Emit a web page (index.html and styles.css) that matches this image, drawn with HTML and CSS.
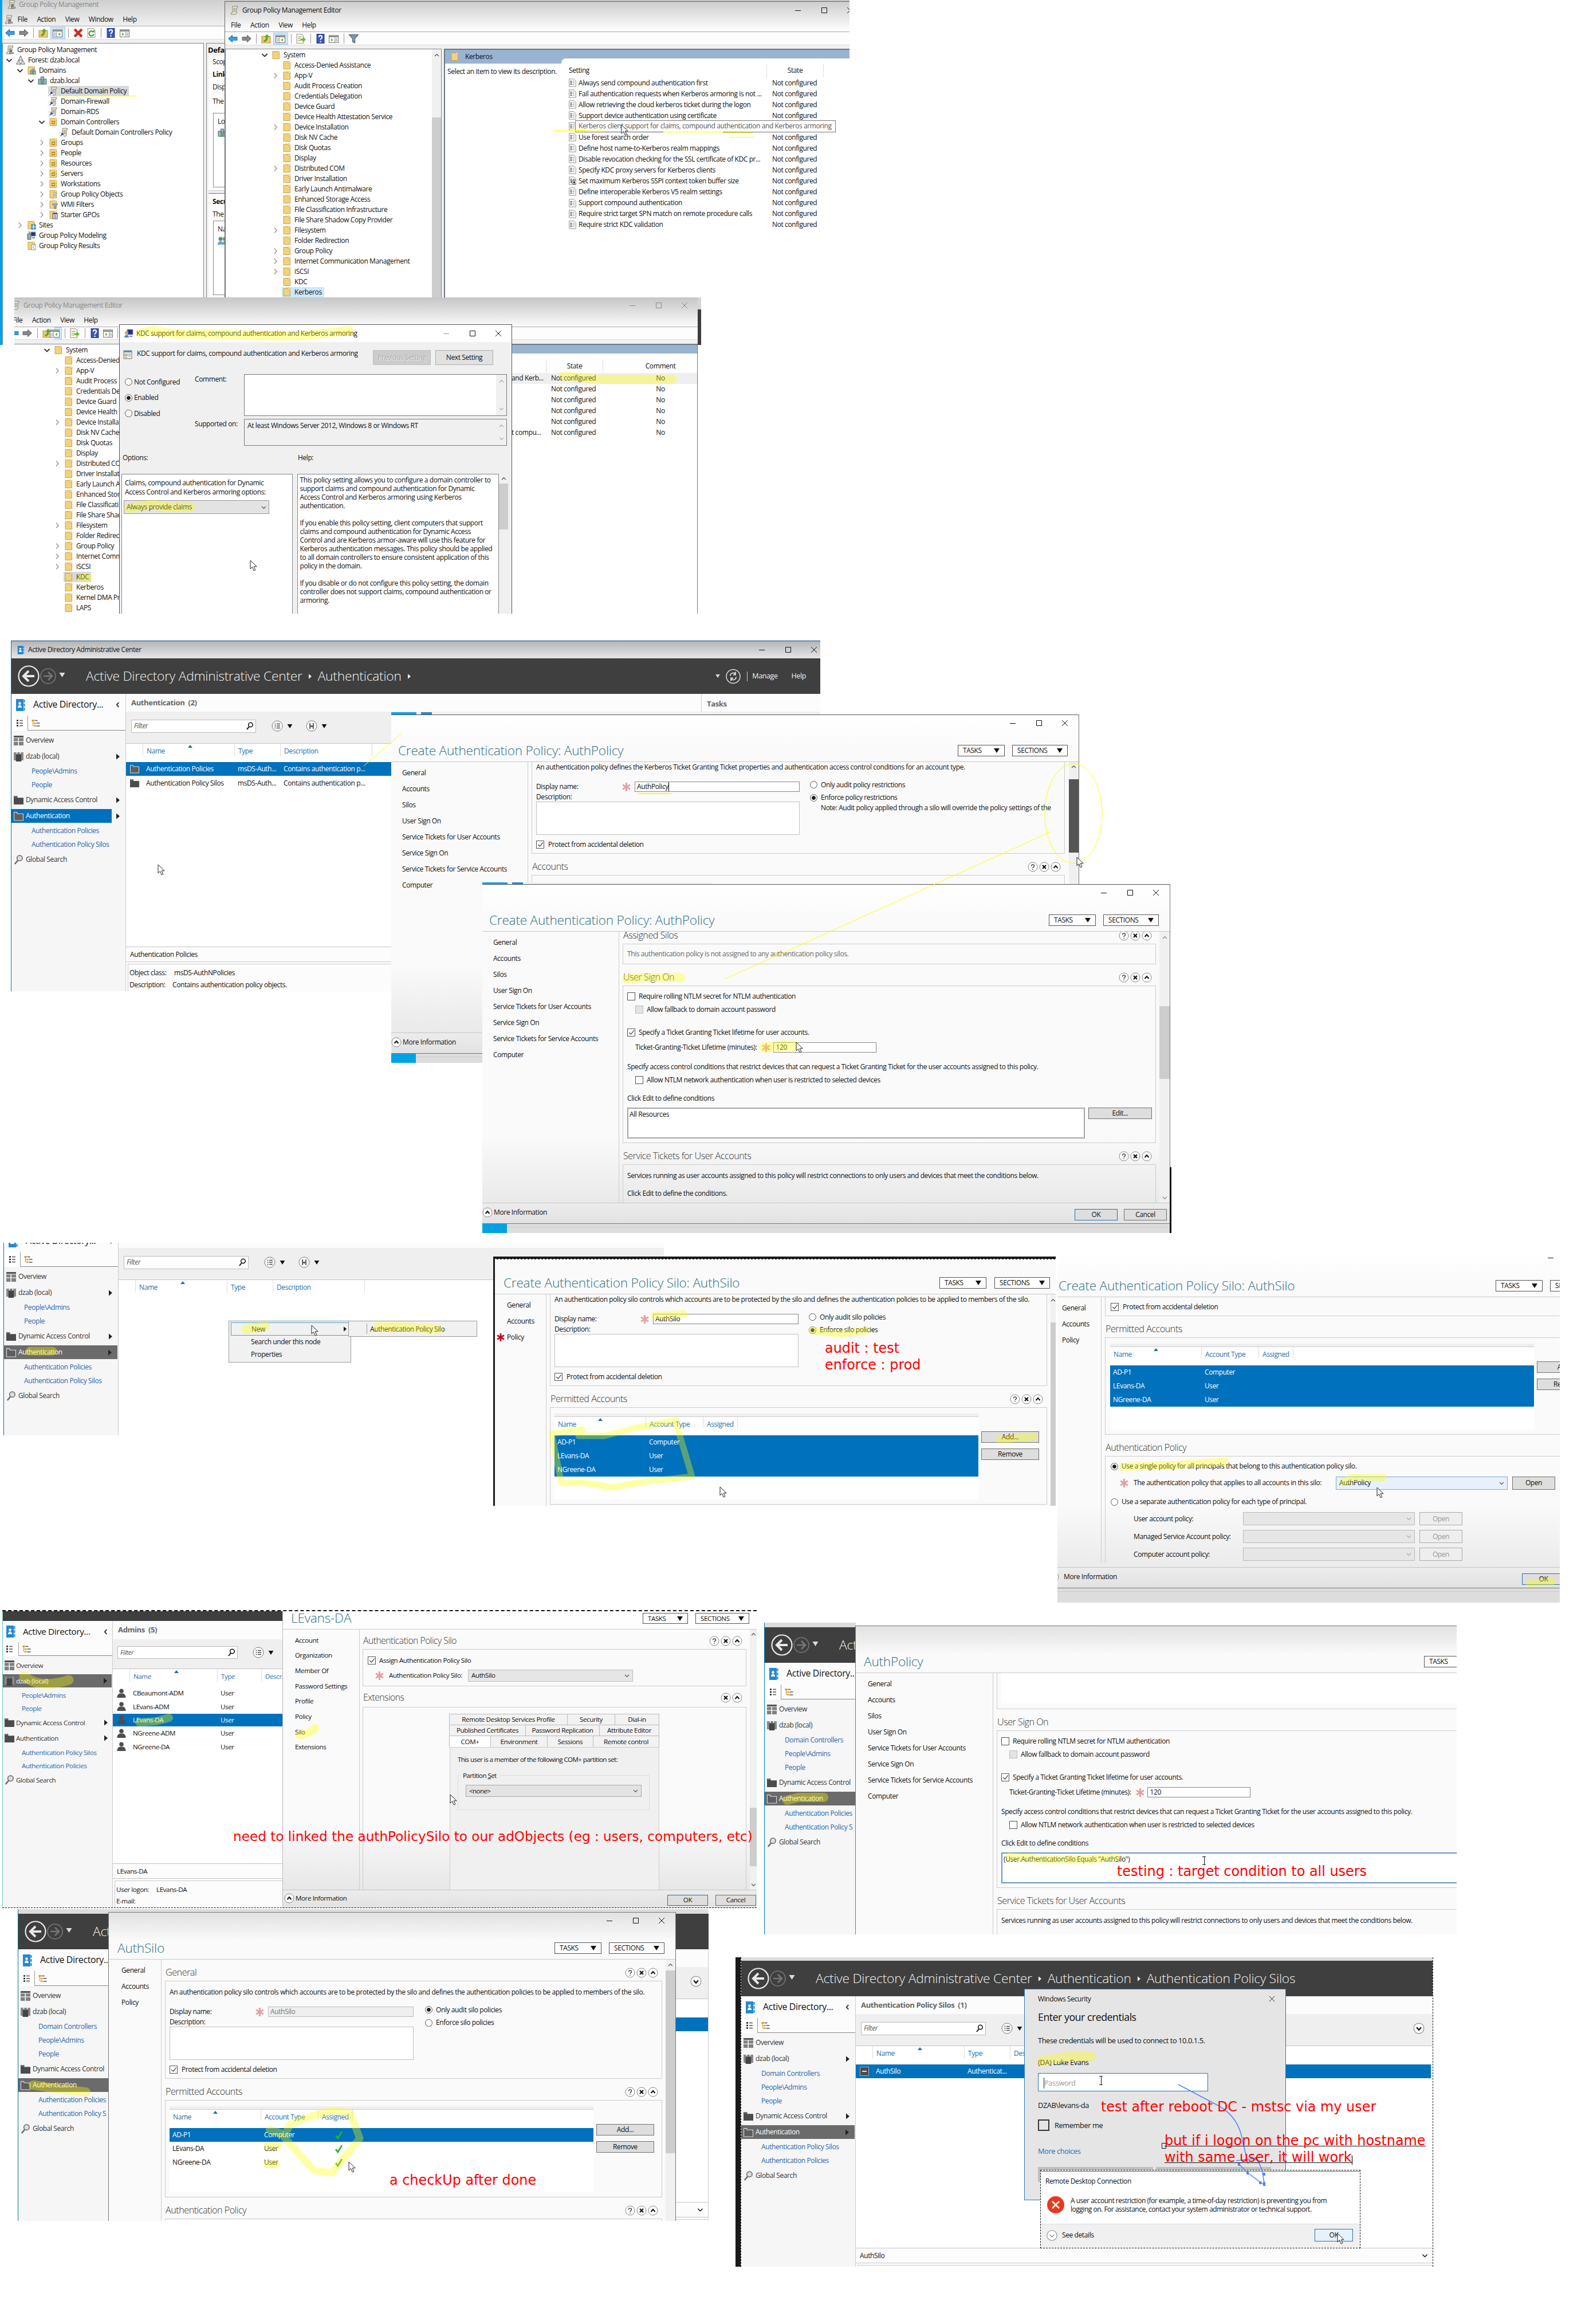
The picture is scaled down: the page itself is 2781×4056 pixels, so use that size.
FILE: index.html
```html
<!DOCTYPE html>
<html lang="en">
<head>
<meta charset="utf-8">
<title>Authentication policies and silos</title>
<link rel="stylesheet" href="styles.css">
</head>
<body>
<svg class="defs" width="0" height="0">
  <symbol id="fold" viewBox="0 0 16 16"><path d="M2 1.500h8l1 1.500h2.500v11.500h-11.500z" fill="#f3d27c" stroke="#c9a24c"/><path d="M10 1l3.500 0v3h-3.500z" fill="#fdf0bd" stroke="#c9a24c" stroke-width=".7"/></symbol>
  <symbol id="ou" viewBox="0 0 16 16"><use href="#fold"/><path d="M5 6h6v6h-6z" fill="#b98a1d"/><path d="M6.500 8h3v2h-3z" fill="#ffe9a0"/></symbol>
  <symbol id="scroll" viewBox="0 0 16 16"><path d="M5 1h9l-1 3h-1v9l-1 2h-9l1-3h2z" fill="#e8e4d4" stroke="#8a8672"/><path d="M6.500 5h4M6.500 7.500h4M6.500 10h4" stroke="#77735f"/></symbol>
  <symbol id="gpm" viewBox="0 0 16 16"><use href="#scroll"/><path d="M8 8h4v4h3v3h-8z" fill="#777"/><path d="M9 13h5" stroke="#ddd"/></symbol>
  <symbol id="link" viewBox="0 0 16 16"><use href="#scroll"/><path d="M0 8h8v8h-8z" fill="#fff" stroke="#999" stroke-width=".6"/><path d="M2 14l3.500-3.500M3 10h3v3" fill="none" stroke="#22338a" stroke-width="1.500"/></symbol>
  <symbol id="forest" viewBox="0 0 16 16"><path d="M8 0l3.500 8h-7zM4.500 8l3.500 7h-7.500zM11.500 8l4 7h-7.500z" fill="#e3e3e3" stroke="#666"/></symbol>
  <symbol id="dom" viewBox="0 0 16 16"><path d="M5.500 1h5v6h-5zM1 5h5v9h-5zM10 5h5v9h-5z" fill="#8fb9c9" stroke="#4c6d78"/><path d="M6 8h4v7h-4z" fill="#69a35a"/></symbol>
  <symbol id="fdom" viewBox="0 0 16 16"><use href="#fold"/><use href="#dom" x="5" y="5" width="11" height="11"/></symbol>
  <symbol id="gpo" viewBox="0 0 16 16"><use href="#fold"/><use href="#scroll" x="5" y="4" width="11" height="12"/></symbol>
  <symbol id="wmi" viewBox="0 0 16 16"><use href="#fold"/><path d="M6 7h10l-4 4v5l-2-1v-4z" fill="#9db4c8" stroke="#56697a" stroke-width=".8"/></symbol>
  <symbol id="starter" viewBox="0 0 16 16"><use href="#fold"/><path d="M7 5h8v10h-8z" fill="#dde9f5" stroke="#456"/><path d="M7 5h8v2h-8z" fill="#b0352c"/><path d="M9 9h4M9 11h4M9 13h4" stroke="#57a"/></symbol>
  <symbol id="sites" viewBox="0 0 16 16"><use href="#fold"/><path d="M8 7h7v8h-7z" fill="#4aa3e0" stroke="#1c6ca8"/><path d="M11.500 7v8M8 11h7" stroke="#fff"/></symbol>
  <symbol id="model" viewBox="0 0 16 16"><path d="M1 5h6v10h-6z" fill="#9aa" stroke="#566"/><path d="M7 2h8v7h-8z" fill="#24348f" stroke="#889"/><path d="M3 1l3 4M9 12h5" stroke="#3a8" stroke-width="2"/></symbol>
  <symbol id="result" viewBox="0 0 16 16"><use href="#fold"/><path d="M8 6h7v9h-7z" fill="#fff" stroke="#888"/><path d="M13 8l-3 2.500l3 2.500" fill="none" stroke="#49a"/></symbol>
  <symbol id="back" viewBox="0 0 16 16"><path d="M1 8l6-5.500v3h8v5h-8v3z" fill="#35a3ea" stroke="#1c6fb0"/></symbol>
  <symbol id="fwd" viewBox="0 0 16 16"><path d="M15 8l-6-5.500v3h-8v5h8v3z" fill="#8a8a8a" stroke="#666"/></symbol>
  <symbol id="up" viewBox="0 0 16 16"><path d="M1 4h14v11h-14z" fill="#eccb6e" stroke="#b8933c"/><path d="M4 11c4 0 4-4 4-6h-2l3.500-4l3 4h-2c0 4-1 7-5 8z" fill="#56b334" stroke="#35801c" stroke-width=".6"/></symbol>
  <symbol id="pane" viewBox="0 0 16 16"><path d="M.5 2.500h15v12h-15z" fill="#fff" stroke="#777"/><path d="M1 4.500h14" stroke="#777" stroke-width="2"/><path d="M6 6v8M2 8h3M2 10h3M2 12h3" stroke="#999"/><path d="M12 7.500v5l-3-2.500z" fill="#49a32c"/></symbol>
  <symbol id="pane2" viewBox="0 0 16 16"><path d="M.5 2.500h15v12h-15z" fill="#fff" stroke="#777"/><path d="M1 4.500h14" stroke="#777" stroke-width="2"/><path d="M10 6v8M11 8h3M11 10h3M11 12h3" stroke="#999"/><path d="M4 7.500v5l3-2.500z" fill="#49a32c"/></symbol>
  <symbol id="del" viewBox="0 0 16 16"><path d="M2 2l12 12M14 2l-12 12" stroke="#d22a20" stroke-width="4"/></symbol>
  <symbol id="refresh" viewBox="0 0 16 16"><path d="M2 .5h9l3 3v12h-12z" fill="#fff" stroke="#999"/><path d="M11 6a4 4 0 1 0 1 4" fill="none" stroke="#3da02a" stroke-width="2"/><path d="M9 7h4v-4z" fill="#3da02a"/></symbol>
  <symbol id="export" viewBox="0 0 16 16"><path d="M1 .5h8l3 3v12h-11z" fill="#fff8dd" stroke="#999"/><path d="M3 5h6M3 8h4M3 11h4" stroke="#888"/><path d="M7 8h4v-3l5 4.500l-5 4.500v-3h-4z" fill="#67bb3c"/></symbol>
  <symbol id="help" viewBox="0 0 16 16"><path d="M2 0h12v16h-12z" fill="#3a55b4" stroke="#1d2f7a"/><path d="M5.500 5.500c0-3.500 5-3.500 5 0c0 2-2.500 2-2.500 4.500M8 12v2" fill="none" stroke="#fff" stroke-width="2"/></symbol>
  <symbol id="funnel" viewBox="0 0 16 16"><path d="M.5 1.500h15l-5.500 6.500v7l-4-2v-5z" fill="#7f97ad" stroke="#4f6376"/></symbol>
  <symbol id="set" viewBox="0 0 14 16"><path d="M.7.7h9l3.500 3.500v11h-12.500z" fill="#fafafa" stroke="#8b8b8b"/><path d="M3 5h2.500M3 8h2.500M3 11h2.500" stroke="#333" stroke-width="1.800"/><path d="M7 5h3.500M7 8h3.500M7 11h3.500" stroke="#888"/></symbol>
  <symbol id="setd" viewBox="0 0 14 16"><use href="#set"/><circle cx="10" cy="10.500" r="4.500" fill="#ddd" stroke="#444"/><path d="M10 7.500v5M8 10.500l2 2l2-2" fill="none" stroke="#222" stroke-width="1.300"/></symbol>
  <symbol id="pc" viewBox="0 0 16 16"><path d="M5 1h10v9h-10z" fill="#1d2f9c" stroke="#99a"/><circle cx="4" cy="7" r="3" fill="#c9a27c"/><path d="M0 15c0-6 8-6 8 0z" fill="#4d86c9"/><path d="M9 12h5v2h-5z" fill="#889"/></symbol>
  <symbol id="tmpl" viewBox="0 0 16 16"><path d="M1 1h14v14h-14z" fill="#f3efe0" stroke="#678"/><path d="M1 2.500h14" stroke="#49a" stroke-width="3"/><path d="M3 7h4v3h-4zM9 7h4M9 10h4M3 13h4" stroke="#976" fill="none"/></symbol>
  <symbol id="people" viewBox="0 0 16 16"><circle cx="5" cy="5" r="3.500" fill="#687"/><circle cx="12" cy="5" r="3.500" fill="#798"/><path d="M0 15c0-8 10-8 10 0zM8 15c0-8 9-8 9 0z" fill="#69a8c9"/></symbol>
  <symbol id="cr" viewBox="0 0 12 12"><path d="M4 1.500l4 4.500l-4 4.500" fill="none" stroke="#9a9a9a" stroke-width="1.500"/></symbol>
  <symbol id="cd" viewBox="0 0 12 12"><path d="M1.500 4l4.500 4.500l4.500-4.500" fill="none" stroke="#333" stroke-width="1.800"/></symbol>
  <symbol id="cu" viewBox="0 0 12 12"><path d="M1.500 8l4.500-4.500l4.500 4.500" fill="none" stroke="currentColor" stroke-width="1.800"/></symbol>
  <symbol id="cdl" viewBox="0 0 12 12"><path d="M1.500 4l4.500 4.500l4.500-4.500" fill="none" stroke="currentColor" stroke-width="1.600"/></symbol>
  <symbol id="cl" viewBox="0 0 8 12"><path d="M6 1.500l-4 4.500l4 4.500" fill="none" stroke="#222" stroke-width="2"/></symbol>
  <symbol id="dn" viewBox="0 0 10 8"><path d="M0 0h10l-5 8z" fill="currentColor"/></symbol>
  <symbol id="rt" viewBox="0 0 6 10"><path d="M0 0l6 5l-6 5z" fill="currentColor"/></symbol>
  <symbol id="srt" viewBox="0 0 8 5"><path d="M4 0l4 5h-8z" fill="#1c6ea8"/></symbol>
  <symbol id="min" viewBox="0 0 12 12"><path d="M1 6.500h10" stroke="currentColor"/></symbol>
  <symbol id="max" viewBox="0 0 12 12"><path d="M1.500 1.500h9v9h-9z" fill="none" stroke="currentColor"/></symbol>
  <symbol id="cls" viewBox="0 0 12 12"><path d="M1 1l10 10M11 1l-10 10" stroke="currentColor"/></symbol>
  <symbol id="adbook" viewBox="0 0 16 21"><path d="M0 0h13v21h-13z" fill="#2488d0"/><path d="M14.500 1v5M14.500 8v5M14.500 15v5" stroke="#2488d0" stroke-width="2"/><circle cx="6.500" cy="7.500" r="2.300" fill="#fff"/><path d="M3 15c0-6 7-6 7 0z" fill="#fff"/></symbol>
  <symbol id="lst" viewBox="0 0 12 12"><path d="M0 1.500h3M0 6h3M0 10.500h3" stroke="#222" stroke-width="2.500"/><path d="M5 1.500h6M5 6h6M5 10.500h6" stroke="#777" stroke-width="2"/></symbol>
  <symbol id="tre" viewBox="0 0 14 12"><path d="M2 2v8.500h3M2 6h3" fill="none" stroke="#c9962e"/><path d="M0 0h4v3h-4zM4 5h3v2.500h-3zM4 9.500h3v2.500h-3z" fill="#d79a22"/><path d="M5 1.500h5M8 6h6M8 11h6" stroke="#555" stroke-width="1.400"/></symbol>
  <symbol id="ovw" viewBox="0 0 16 16"><path d="M0 0h16v3h-16z" fill="#555"/><path d="M0 4h7v5h-7zM8.500 4h7.500v5h-7.500zM0 10h7v6h-7zM8.500 10h7.500v6h-7.500z" fill="#808080"/></symbol>
  <symbol id="srv" viewBox="0 0 16 16"><path d="M0 1h4.500v13h-4.500zM11.500 1h4.500v13h-4.500z" fill="#8a8a8a"/><path d="M3.500 4h9v12h-9z" fill="#454545"/><path d="M6 1h4v3h-4z" fill="#777"/></symbol>
  <symbol id="dfo" viewBox="0 0 16 16"><path d="M0 1h6v3h10v11h-16z" fill="#4c4c4c"/><path d="M1 2h4" stroke="#aaa"/></symbol>
  <symbol id="ofo" viewBox="0 0 16 16"><path d="M.5 1.500h5v2.500h10v11h-15z" fill="#5e5e5e" stroke="#ddd"/></symbol>
  <symbol id="mag" viewBox="0 0 16 18"><circle cx="10" cy="6" r="5" fill="#ddd" stroke="#666" stroke-width="1.600"/><path d="M6.500 10l-5.500 7" stroke="#666" stroke-width="2.500"/></symbol>
  <symbol id="find" viewBox="0 0 12 14"><circle cx="7.500" cy="5" r="3.800" fill="none" stroke="#111" stroke-width="1.500"/><path d="M5 8l-4 5" stroke="#111" stroke-width="2"/></symbol>
  <symbol id="usr" viewBox="0 0 16 18"><circle cx="8" cy="4.500" r="4" fill="#4d4d4d"/><path d="M0 17c0-6 3-7 5-8h6c2 1 5 2 5 8z" fill="#4d4d4d"/></symbol>
  <symbol id="cbl" viewBox="0 0 20 20"><circle cx="10" cy="10" r="9" fill="#fff" stroke="#777"/><path d="M5.500 6.500h2M5.500 10h2M5.500 13.500h2M9 6.500h6M9 10h6M9 13.500h6" stroke="#444" stroke-width="1.500"/></symbol>
  <symbol id="cbs" viewBox="0 0 20 20"><circle cx="10" cy="10" r="9" fill="#fff" stroke="#777"/><path d="M6 5h8v10h-8z" fill="#666"/><path d="M8 5h4v4h-4zM8 12h4v3h-4z" fill="#eee"/></symbol>
  <symbol id="q" viewBox="0 0 18 18"><circle cx="9" cy="9" r="8" fill="#fff" stroke="#888"/><path d="M6.500 7.500c0-3.500 5-3.500 5 0c0 1.500-2.500 1.800-2.500 3.500M9 12.500v1.500" fill="none" stroke="#333" stroke-width="1.300"/></symbol>
  <symbol id="x" viewBox="0 0 18 18"><circle cx="9" cy="9" r="8" fill="#fff" stroke="#888"/><path d="M6 6l6 6M12 6l-6 6" stroke="#111" stroke-width="2.200"/></symbol>
  <symbol id="c" viewBox="0 0 18 18"><circle cx="9" cy="9" r="8" fill="#fff" stroke="#888"/><path d="M5.500 11l3.500-4l3.500 4" fill="none" stroke="#111" stroke-width="2"/></symbol>
  <symbol id="v" viewBox="0 0 18 18"><circle cx="9" cy="9" r="8" fill="#fff" stroke="#888"/><path d="M5.500 7.500l3.500 4l3.500-4" fill="none" stroke="#111" stroke-width="2"/></symbol>
  <symbol id="ast" viewBox="0 0 14 14"><path d="M7 0v14M1 3.500l12 7M13 3.500l-12 7" stroke="currentColor" stroke-width="2.800"/></symbol>
  <symbol id="tick" viewBox="0 0 14 14"><path d="M2 8l3.500 4.500l6.500-11" fill="none" stroke="#28b428" stroke-width="2.600"/></symbol>
  <symbol id="navb" viewBox="0 0 80 40"><circle cx="20" cy="20" r="17.500" fill="none" stroke="#e8e8e8" stroke-width="2.200"/><path d="M30 20h-18M20 11l-9 9l9 9" fill="none" stroke="#e8e8e8" stroke-width="4"/><circle cx="54" cy="20" r="13" fill="none" stroke="#777" stroke-width="1.600"/><path d="M46 20h14M54 13l7 7l-7 7" fill="none" stroke="#777" stroke-width="2.600"/></symbol>
  <symbol id="ptr" viewBox="0 0 14 20"><path d="M1 1v15l3.500-3.500l2.800 6.500l2.600-1.200l-2.700-6h5z" fill="#fff" stroke="#222"/></symbol>
</svg>

<main class="board">

<!-- Group Policy Management -->
<section class="win gpmc">
  <div class="cap2 dim"><svg class="i"><use href="#gpm"/></svg><span>Group Policy Management</span></div>
  <div class="menu"><svg class="i"><use href="#gpm"/></svg><span>File</span><span>Action</span><span>View</span><span>Window</span><span>Help</span></div>
  <div class="tb"><svg class="i"><use href="#back"/></svg><svg class="i"><use href="#fwd"/></svg><hr><svg class="i"><use href="#up"/></svg><span class="on"><svg class="i"><use href="#pane"/></svg></span><hr><svg class="i"><use href="#del"/></svg><svg class="i"><use href="#refresh"/></svg><hr><svg class="i"><use href="#help"/></svg><svg class="i"><use href="#pane2"/></svg></div>
  <div class="gp-body">
    <ul class="tree t1">
      <li class="root"><svg class="i"><use href="#gpm"/></svg>Group Policy Management</li>
      <li><svg class="ch"><use href="#cd"/></svg><svg class="i"><use href="#forest"/></svg>Forest: dzab.local</li>
      <li class="l1"><svg class="ch"><use href="#cd"/></svg><svg class="i"><use href="#fdom"/></svg>Domains</li>
      <li class="l2"><svg class="ch"><use href="#cd"/></svg><svg class="i"><use href="#dom"/></svg>dzab.local</li>
      <li class="l3"><i class="ch"></i><span class="picked"><svg class="i"><use href="#link"/></svg>Default Domain Policy</span></li>
      <li class="l3"><i class="ch"></i><svg class="i"><use href="#link"/></svg>Domain-Firewall</li>
      <li class="l3"><i class="ch"></i><svg class="i"><use href="#link"/></svg>Domain-RDS</li>
      <li class="l3"><svg class="ch"><use href="#cd"/></svg><svg class="i"><use href="#ou"/></svg>Domain Controllers</li>
      <li class="l4"><i class="ch"></i><svg class="i"><use href="#link"/></svg>Default Domain Controllers Policy</li>
      <li class="l3"><svg class="ch"><use href="#cr"/></svg><svg class="i"><use href="#ou"/></svg>Groups</li>
      <li class="l3"><svg class="ch"><use href="#cr"/></svg><svg class="i"><use href="#ou"/></svg>People</li>
      <li class="l3"><svg class="ch"><use href="#cr"/></svg><svg class="i"><use href="#ou"/></svg>Resources</li>
      <li class="l3"><svg class="ch"><use href="#cr"/></svg><svg class="i"><use href="#ou"/></svg>Servers</li>
      <li class="l3"><svg class="ch"><use href="#cr"/></svg><svg class="i"><use href="#ou"/></svg>Workstations</li>
      <li class="l3"><svg class="ch"><use href="#cr"/></svg><svg class="i"><use href="#gpo"/></svg>Group Policy Objects</li>
      <li class="l3"><svg class="ch"><use href="#cr"/></svg><svg class="i"><use href="#wmi"/></svg>WMI Filters</li>
      <li class="l3"><svg class="ch"><use href="#cr"/></svg><svg class="i"><use href="#starter"/></svg>Starter GPOs</li>
      <li class="l1"><svg class="ch"><use href="#cr"/></svg><svg class="i"><use href="#sites"/></svg>Sites</li>
      <li class="l1"><i class="ch"></i><svg class="i"><use href="#model"/></svg>Group Policy Modeling</li>
      <li class="l1"><i class="ch"></i><svg class="i"><use href="#result"/></svg>Group Policy Results</li>
    </ul>
    <div class="scope">
      <h4>Default</h4>
      <div class="scope-tab">
        <p>Scope</p><p class="b">Links</p><p>Display</p><p class="far">The following</p>
        <div class="gbox">Location<svg class="i"><use href="#dom"/></svg></div>
        <div class="bar"></div>
        <p class="b">Security</p><p>The settings</p>
        <div class="gbox">Name<svg class="i"><use href="#people"/></svg></div>
        <div class="stub"></div>
      </div>
    </div>
  </div>
</section>

<!-- Group Policy Management Editor: Kerberos -->
<section class="win gped">
  <div class="cap2"><svg class="i"><use href="#scroll"/></svg><span>Group Policy Management Editor</span><div class="wb"><svg><use href="#min"/></svg><svg><use href="#max"/></svg><svg><use href="#cls"/></svg></div></div>
  <div class="menu"><span>File</span><span>Action</span><span>View</span><span>Help</span></div>
  <div class="tb"><svg class="i"><use href="#back"/></svg><svg class="i"><use href="#fwd"/></svg><hr><svg class="i"><use href="#up"/></svg><span class="on"><svg class="i"><use href="#pane"/></svg></span><hr><svg class="i"><use href="#export"/></svg><hr><svg class="i"><use href="#help"/></svg><svg class="i"><use href="#pane2"/></svg><hr><svg class="i"><use href="#funnel"/></svg></div>
  <div class="gp-body">
    <div class="tree-wrap">
      <ul class="tree t2">
        <li class="sys"><svg class="ch"><use href="#cd"/></svg><svg class="i"><use href="#fold"/></svg>System</li>
        <li><i class="ch"></i><svg class="i"><use href="#fold"/></svg>Access-Denied Assistance</li>
        <li><svg class="ch"><use href="#cr"/></svg><svg class="i"><use href="#fold"/></svg>App-V</li>
        <li><i class="ch"></i><svg class="i"><use href="#fold"/></svg>Audit Process Creation</li>
        <li><i class="ch"></i><svg class="i"><use href="#fold"/></svg>Credentials Delegation</li>
        <li><i class="ch"></i><svg class="i"><use href="#fold"/></svg>Device Guard</li>
        <li><i class="ch"></i><svg class="i"><use href="#fold"/></svg>Device Health Attestation Service</li>
        <li><svg class="ch"><use href="#cr"/></svg><svg class="i"><use href="#fold"/></svg>Device Installation</li>
        <li><i class="ch"></i><svg class="i"><use href="#fold"/></svg>Disk NV Cache</li>
        <li><i class="ch"></i><svg class="i"><use href="#fold"/></svg>Disk Quotas</li>
        <li><i class="ch"></i><svg class="i"><use href="#fold"/></svg>Display</li>
        <li><svg class="ch"><use href="#cr"/></svg><svg class="i"><use href="#fold"/></svg>Distributed COM</li>
        <li><i class="ch"></i><svg class="i"><use href="#fold"/></svg>Driver Installation</li>
        <li><i class="ch"></i><svg class="i"><use href="#fold"/></svg>Early Launch Antimalware</li>
        <li><i class="ch"></i><svg class="i"><use href="#fold"/></svg>Enhanced Storage Access</li>
        <li><i class="ch"></i><svg class="i"><use href="#fold"/></svg>File Classification Infrastructure</li>
        <li><i class="ch"></i><svg class="i"><use href="#fold"/></svg>File Share Shadow Copy Provider</li>
        <li><svg class="ch"><use href="#cr"/></svg><svg class="i"><use href="#fold"/></svg>Filesystem</li>
        <li><i class="ch"></i><svg class="i"><use href="#fold"/></svg>Folder Redirection</li>
        <li><svg class="ch"><use href="#cr"/></svg><svg class="i"><use href="#fold"/></svg>Group Policy</li>
        <li><svg class="ch"><use href="#cr"/></svg><svg class="i"><use href="#fold"/></svg>Internet Communication Management</li>
        <li><svg class="ch"><use href="#cr"/></svg><svg class="i"><use href="#fold"/></svg>iSCSI</li>
        <li><i class="ch"></i><svg class="i"><use href="#fold"/></svg>KDC</li>
        <li><i class="ch"></i><span class="picked blue"><svg class="i"><use href="#fold"/></svg>Kerberos</span></li>
      </ul>
      <div class="sb tsb"><svg><use href="#cu"/></svg><i></i></div>
    </div>
    <div class="kpane">
      <div class="kleft"><div class="khead"><svg class="i"><use href="#fold"/></svg>Kerberos</div><p>Select an item to view its description.</p></div>
      <div class="ktab">
        <div class="krow khd"><span class="kn">Setting</span><span class="ks">State</span><i></i></div>
        <div class="krow"><span class="kn"><svg><use href="#set"/></svg>Always send compound authentication first</span><span>Not configured</span></div>
        <div class="krow"><span class="kn"><svg><use href="#set"/></svg>Fail authentication requests when Kerberos armoring is not ...</span><span>Not configured</span></div>
        <div class="krow"><span class="kn"><svg><use href="#set"/></svg>Allow retrieving the cloud kerberos ticket during the logon</span><span>Not configured</span></div>
        <div class="krow"><span class="kn"><svg><use href="#set"/></svg>Support device authentication using certificate</span><span>Not configured</span></div>
        <div class="krow"><span class="kn"><svg><use href="#set"/></svg><em>Kerberos client support for claims, compound authentication and Kerberos armoring</em></span></div>
        <div class="krow"><span class="kn"><svg><use href="#set"/></svg>Use forest search order</span><span>Not configured</span></div>
        <div class="krow"><span class="kn"><svg><use href="#set"/></svg>Define host name-to-Kerberos realm mappings</span><span>Not configured</span></div>
        <div class="krow"><span class="kn"><svg><use href="#set"/></svg>Disable revocation checking for the SSL certificate of KDC pr...</span><span>Not configured</span></div>
        <div class="krow"><span class="kn"><svg><use href="#set"/></svg>Specify KDC proxy servers for Kerberos clients</span><span>Not configured</span></div>
        <div class="krow"><span class="kn"><svg><use href="#setd"/></svg>Set maximum Kerberos SSPI context token buffer size</span><span>Not configured</span></div>
        <div class="krow"><span class="kn"><svg><use href="#set"/></svg>Define interoperable Kerberos V5 realm settings</span><span>Not configured</span></div>
        <div class="krow"><span class="kn"><svg><use href="#set"/></svg>Support compound authentication</span><span>Not configured</span></div>
        <div class="krow"><span class="kn"><svg><use href="#set"/></svg>Require strict target SPN match on remote procedure calls</span><span>Not configured</span></div>
        <div class="krow"><span class="kn"><svg><use href="#set"/></svg>Require strict KDC validation</span><span>Not configured</span></div>
      </div>
    </div>
  </div>
</section>

<!-- Group Policy Management Editor: KDC -->
<section class="win kdc">
  <div class="kdc-main">
    <div class="cap2 dim"><svg class="i"><use href="#scroll"/></svg><span>Group Policy Management Editor</span><div class="wb"><svg><use href="#min"/></svg><svg><use href="#max"/></svg><svg><use href="#cls"/></svg></div></div>
    <div class="menu"><span>File</span><span>Action</span><span>View</span><span>Help</span></div>
    <div class="tb"><svg class="i"><use href="#back"/></svg><svg class="i"><use href="#fwd"/></svg><hr><svg class="i"><use href="#up"/></svg><span class="on"><svg class="i"><use href="#pane"/></svg></span><hr><svg class="i"><use href="#export"/></svg><hr><svg class="i"><use href="#help"/></svg><svg class="i"><use href="#pane2"/></svg><hr></div>
    <div class="gp-body">
      <ul class="tree t3">
        <li class="sys"><svg class="ch"><use href="#cd"/></svg><svg class="i"><use href="#fold"/></svg>System</li>
        <li><i class="ch"></i><svg class="i"><use href="#fold"/></svg>Access-Denied</li>
        <li><svg class="ch"><use href="#cr"/></svg><svg class="i"><use href="#fold"/></svg>App-V</li>
        <li><i class="ch"></i><svg class="i"><use href="#fold"/></svg>Audit Process</li>
        <li><i class="ch"></i><svg class="i"><use href="#fold"/></svg>Credentials De</li>
        <li><i class="ch"></i><svg class="i"><use href="#fold"/></svg>Device Guard</li>
        <li><i class="ch"></i><svg class="i"><use href="#fold"/></svg>Device Health</li>
        <li><svg class="ch"><use href="#cr"/></svg><svg class="i"><use href="#fold"/></svg>Device Installa</li>
        <li><i class="ch"></i><svg class="i"><use href="#fold"/></svg>Disk NV Cache</li>
        <li><i class="ch"></i><svg class="i"><use href="#fold"/></svg>Disk Quotas</li>
        <li><i class="ch"></i><svg class="i"><use href="#fold"/></svg>Display</li>
        <li><svg class="ch"><use href="#cr"/></svg><svg class="i"><use href="#fold"/></svg>Distributed CO</li>
        <li><i class="ch"></i><svg class="i"><use href="#fold"/></svg>Driver Installat</li>
        <li><i class="ch"></i><svg class="i"><use href="#fold"/></svg>Early Launch A</li>
        <li><i class="ch"></i><svg class="i"><use href="#fold"/></svg>Enhanced Stor</li>
        <li><i class="ch"></i><svg class="i"><use href="#fold"/></svg>File Classificati</li>
        <li><i class="ch"></i><svg class="i"><use href="#fold"/></svg>File Share Shad</li>
        <li><svg class="ch"><use href="#cr"/></svg><svg class="i"><use href="#fold"/></svg>Filesystem</li>
        <li><i class="ch"></i><svg class="i"><use href="#fold"/></svg>Folder Redirec</li>
        <li><svg class="ch"><use href="#cr"/></svg><svg class="i"><use href="#fold"/></svg>Group Policy</li>
        <li><svg class="ch"><use href="#cr"/></svg><svg class="i"><use href="#fold"/></svg>Internet Comm</li>
        <li><svg class="ch"><use href="#cr"/></svg><svg class="i"><use href="#fold"/></svg>iSCSI</li>
        <li><i class="ch"></i><span class="picked"><svg class="i"><use href="#fold"/></svg>KDC</span></li>
        <li><i class="ch"></i><svg class="i"><use href="#fold"/></svg>Kerberos</li>
        <li><i class="ch"></i><svg class="i"><use href="#fold"/></svg>Kernel DMA Pr</li>
        <li><i class="ch"></i><svg class="i"><use href="#fold"/></svg>LAPS</li>
      </ul>
      <div class="kdc-list">
        <div class="hd"></div>
        <div class="kr kh"><span></span><span>State</span><span>Comment</span></div>
        <div class="kr sel"><span>and Kerb...</span><span>Not configured</span><span>No</span></div>
        <div class="kr"><span></span><span>Not configured</span><span>No</span></div>
        <div class="kr"><span></span><span>Not configured</span><span>No</span></div>
        <div class="kr"><span></span><span>Not configured</span><span>No</span></div>
        <div class="kr"><span></span><span>Not configured</span><span>No</span></div>
        <div class="kr"><span>t compu...</span><span>Not configured</span><span>No</span></div>
      </div>
    </div>
  </div>
  <div class="kdc-edge"></div>
</section>

<section class="win pol">
  <div class="pol-cap"><svg class="i"><use href="#pc"/></svg><span>KDC support for claims, compound authentication and Kerberos armoring</span><div class="wb"><svg class="off"><use href="#min"/></svg><svg><use href="#max"/></svg><svg><use href="#cls"/></svg></div></div>
  <div class="pol-top"><svg class="i"><use href="#tmpl"/></svg><span>KDC support for claims, compound authentication and Kerberos armoring</span><b class="btn off">Previous Setting</b><b class="btn">Next Setting</b></div>
  <div class="pol-mid">
    <div class="radios"><p><i class="rd"></i>Not Configured</p><p><i class="rd on"></i>Enabled</p><p><i class="rd"></i>Disabled</p></div>
    <div class="labels"><p>Comment:</p><p>Supported on:</p></div>
    <div class="areas"><div class="area"><span></span><div class="asb"><svg><use href="#cu"/></svg><svg><use href="#cdl"/></svg></div></div><div class="area ro"><span>At least Windows Server 2012, Windows 8 or Windows RT</span><div class="asb"><svg><use href="#cu"/></svg><svg><use href="#cdl"/></svg></div></div></div>
  </div>
  <div class="pol-lbl"><span>Options:</span><span>Help:</span></div>
  <div class="pol-bot">
    <div class="opts"><p>Claims, compound authentication for Dynamic<br>Access Control and Kerberos armoring options:</p><div class="combo">Always provide claims<svg><use href="#cdl"/></svg></div></div>
    <div class="helpt">This policy setting allows you to configure a domain controller to<br>support claims and compound authentication for Dynamic<br>Access Control and Kerberos armoring using Kerberos<br>authentication.<br><br>If you enable this policy setting, client computers that support<br>claims and compound authentication for Dynamic Access<br>Control and are Kerberos armor-aware will use this feature for<br>Kerberos authentication messages. This policy should be applied<br>to all domain controllers to ensure consistent application of this<br>policy in the domain.<br><br>If you disable or do not configure this policy setting, the domain<br>controller does not support claims, compound authentication or<br>armoring.</div>
    <div class="sb hsb"><svg><use href="#cu"/></svg><i></i></div>
  </div>
</section>

<!-- Active Directory Administrative Center -->
<section class="win adac a3">
  <div class="ad-cap"><svg class="bk"><use href="#adbook"/></svg><span>Active Directory Administrative Center</span><div class="wb"><svg><use href="#min"/></svg><svg><use href="#max"/></svg><svg><use href="#cls"/></svg></div></div>
  <header class="dark"><svg class="nv"><use href="#navb"/></svg><svg class="dn"><use href="#dn"/></svg><h1>Active Directory Administrative Center</h1><svg class="rt"><use href="#rt"/></svg><h1>Authentication</h1><svg class="rt"><use href="#rt"/></svg><div class="dr"><svg class="dn sm"><use href="#dn"/></svg><svg class="rf" viewBox="0 0 26 26"><circle cx="13" cy="13" r="12" fill="none" stroke="#ddd" stroke-width="1.500"/><path d="M8 12a5 5 0 0 1 9-3M18 14a5 5 0 0 1-9 3M17 5v5h-4M9 21v-5h4" fill="none" stroke="#ddd" stroke-width="1.800"/></svg><hr><span>Manage</span><span>Help</span></div></header>
  <div class="ad-body">
    <nav class="side">
      <div class="brand"><svg class="bk"><use href="#adbook"/></svg><span>Active Directory...</span><svg class="cl"><use href="#cl"/></svg></div>
      <div class="tabs"><i><svg><use href="#lst"/></svg></i><b><svg><use href="#tre"/></svg></b></div>
      <a><svg><use href="#ovw"/></svg>Overview</a>
      <a><svg><use href="#srv"/></svg>dzab (local)<svg class="rt"><use href="#rt"/></svg></a>
      <a class="sub">People\Admins</a><a class="sub">People</a>
      <a><svg><use href="#dfo"/></svg>Dynamic Access Control<svg class="rt"><use href="#rt"/></svg></a>
      <a class="sel bl"><svg><use href="#ofo"/></svg>Authentication<svg class="rt"><use href="#rt"/></svg></a>
      <a class="sub">Authentication Policies</a><a class="sub">Authentication Policy Silos</a>
      <a><svg><use href="#mag"/></svg>Global Search</a>
    </nav>
    <div class="list">
      <div class="lh"><b>Authentication &nbsp;(2)</b><b class="tasks">Tasks</b></div>
      <div class="fbar"><div class="fi">Filter<svg><use href="#find"/></svg></div><svg class="cb"><use href="#cbl"/></svg><svg class="dn"><use href="#dn"/></svg><svg class="cb"><use href="#cbs"/></svg><svg class="dn"><use href="#dn"/></svg></div>
      <div class="cols"><i></i><span class="srt">Name<svg><use href="#srt"/></svg></span><span>Type</span><span>Description</span><span></span></div>
      <div class="lr sel"><i><svg><use href="#ofo"/></svg></i><span>Authentication Policies</span><span>msDS-Auth...</span><span>Contains authentication p...</span></div>
      <div class="lr"><i><svg><use href="#dfo"/></svg></i><span>Authentication Policy Silos</span><span>msDS-Auth...</span><span>Contains authentication p...</span></div>
      <div class="det"><h5>Authentication Policies</h5><div class="dbox"><p><span>Object class:</span>msDS-AuthNPolicies</p><p><span class="w75">Description:</span>Contains authentication policy objects.</p></div></div>
    </div>
  </div>
</section>

<!-- Create Authentication Policy, general -->
<div class="win strip s4s"><i></i><i></i></div>
<section class="win dlg d4">
  <div class="cap"><div class="wb"><svg><use href="#min"/></svg><svg><use href="#max"/></svg><svg><use href="#cls"/></svg></div></div>
  <div class="dt"><h2>Create Authentication Policy: AuthPolicy</h2><span class="tk">TASKS<svg><use href="#dn"/></svg></span><span class="tk sc">SECTIONS<svg><use href="#dn"/></svg></span></div>
  <div class="db">
    <ul class="dn-list"><li>General</li><li>Accounts</li><li>Silos</li><li>User Sign On</li><li>Service Tickets for User Accounts</li><li>Service Sign On</li><li>Service Tickets for Service Accounts</li><li>Computer</li></ul>
    <div class="ct">
      <div class="box gen up11"><p class="intro">An authentication policy defines the Kerberos Ticket Granting Ticket properties and authentication access control conditions for an account type.</p>
        <div class="g2"><div class="gl"><div class="gd"><span>Display name:</span><svg class="ast"><use href="#ast"/></svg><b class="in">AuthPolicy<i class="crt"></i></b></div><div class="gdl">Description:</div><div class="ta"></div><div class="ck"><i class="cx on"></i>Protect from accidental deletion</div></div>
        <div class="gr"><p><i class="rd"></i>Only audit policy restrictions</p><p><i class="rd on"></i>Enforce policy restrictions</p><p class="note">Note: Audit policy applied through a silo will override the policy settings of the</p></div></div></div>
      <div class="sh"><h3>Accounts</h3><svg><use href="#q"/></svg><svg><use href="#x"/></svg><svg><use href="#c"/></svg></div>
      <div class="box rest"></div>
    </div>
    <div class="sb v4"><svg><use href="#cu"/></svg><i></i></div>
  </div>
  <div class="ft"><svg><use href="#c"/></svg>More Information</div>
  <div class="task"><i></i></div>
</section>

<!-- Create Authentication Policy, user sign on -->
<div class="win strip s5s"><i></i><i></i></div>
<section class="win dlg d5">
  <div class="cap"><div class="wb"><svg><use href="#min"/></svg><svg><use href="#max"/></svg><svg><use href="#cls"/></svg></div></div>
  <div class="dt"><h2>Create Authentication Policy: AuthPolicy</h2><span class="tk">TASKS<svg><use href="#dn"/></svg></span><span class="tk sc">SECTIONS<svg><use href="#dn"/></svg></span></div>
  <div class="db">
    <ul class="dn-list"><li>General</li><li>Accounts</li><li>Silos</li><li>User Sign On</li><li>Service Tickets for User Accounts</li><li>Service Sign On</li><li>Service Tickets for Service Accounts</li><li>Computer</li></ul>
    <div class="ct">
      <div class="sh up16"><h3>Assigned Silos</h3><svg><use href="#q"/></svg><svg><use href="#x"/></svg><svg><use href="#c"/></svg></div>
      <div class="box none">This authentication policy is not assigned to any authentication policy silos.</div>
      <div class="sh"><h3>User Sign On</h3><svg><use href="#q"/></svg><svg><use href="#x"/></svg><svg><use href="#c"/></svg></div>
      <div class="box uso">
        <p><i class="cx"></i>Require rolling NTLM secret for NTLM authentication</p>
        <p class="in1"><i class="cx dis"></i>Allow fallback to domain account password</p>
        <p class="tgt"><i class="cx on"></i>Specify a Ticket Granting Ticket lifetime for user accounts.</p>
        <p class="in1 ttl">Ticket-Granting-Ticket Lifetime (minutes):<svg class="ast"><use href="#ast"/></svg><b class="in">120</b></p>
        <p class="acc">Specify access control conditions that restrict devices that can request a Ticket Granting Ticket for the user accounts assigned to this policy.</p>
        <p class="in1 alw"><i class="cx"></i>Allow NTLM network authentication when user is restricted to selected devices</p>
        <p class="clk">Click Edit to define conditions</p>
        <div class="cond"><div class="cbx">All Resources</div><b class="btn">Edit...</b></div>
      </div>
      <div class="sh"><h3>Service Tickets for User Accounts</h3><svg><use href="#q"/></svg><svg><use href="#x"/></svg><svg><use href="#c"/></svg></div>
      <div class="box stu"><p>Services running as user accounts assigned to this policy will restrict connections to only users and devices that meet the conditions below.</p><p>Click Edit to define the conditions.</p><div class="cut"><i></i><i></i></div></div>
    </div>
    <div class="sb v5"><svg><use href="#cu"/></svg><i></i><svg><use href="#cdl"/></svg></div>
  </div>
  <div class="ft"><svg><use href="#c"/></svg>More Information<b class="btn ok">OK</b><b class="btn">Cancel</b></div>
  <div class="task"><i></i></div>
</section>
<div class="win blk"></div>

<!-- New silo context menu -->
<section class="win adac a6">
  <div class="ad-body">
    <nav class="side">
      <div class="brand"><svg class="bk"><use href="#adbook"/></svg><span>Active Directory...</span><svg class="cl"><use href="#cl"/></svg></div>
      <div class="tabs"><i><svg><use href="#lst"/></svg></i><b><svg><use href="#tre"/></svg></b></div>
      <a><svg><use href="#ovw"/></svg>Overview</a>
      <a><svg><use href="#srv"/></svg>dzab (local)<svg class="rt"><use href="#rt"/></svg></a>
      <a class="sub">People\Admins</a><a class="sub">People</a>
      <a><svg><use href="#dfo"/></svg>Dynamic Access Control<svg class="rt"><use href="#rt"/></svg></a>
      <a class="sel"><svg><use href="#ofo"/></svg>Authentication<svg class="rt"><use href="#rt"/></svg></a>
      <a class="sub">Authentication Policies</a><a class="sub">Authentication Policy Silos</a>
      <a><svg><use href="#mag"/></svg>Global Search</a>
    </nav>
    <div class="list">
      <div class="lh"></div>
      <div class="fbar"><div class="fi">Filter<svg><use href="#find"/></svg></div><svg class="cb"><use href="#cbl"/></svg><svg class="dn"><use href="#dn"/></svg><svg class="cb"><use href="#cbs"/></svg><svg class="dn"><use href="#dn"/></svg></div>
      <div class="cols"><i></i><span class="srt">Name<svg><use href="#srt"/></svg></span><span>Type</span><span>Description</span><span></span></div>
    </div>
  </div>
</section>
<div class="win ctx"><p class="hot">New<svg><use href="#rt"/></svg></p><p>Search under this node</p><p>Properties</p></div>
<div class="win ctx2"><p>Authentication Policy Silo</p></div>

<!-- Create Authentication Policy Silo -->
<section class="win dlg d7">
  <div class="dt"><h2>Create Authentication Policy Silo: AuthSilo</h2><span class="tk">TASKS<svg><use href="#dn"/></svg></span><span class="tk sc">SECTIONS<svg><use href="#dn"/></svg></span></div>
  <div class="db">
    <ul class="dn-list"><li>General</li><li>Accounts</li><li><svg class="req"><use href="#ast"/></svg>Policy</li></ul>
    <div class="ct">
      <div class="box gen up11"><p class="intro">An authentication policy silo controls which accounts are to be protected by the silo and defines the authentication policies to be applied to members of the silo.</p>
        <div class="g2"><div class="gl"><div class="gd"><span>Display name:</span><svg class="ast"><use href="#ast"/></svg><b class="in">AuthSilo</b></div><div class="gdl">Description:</div><div class="ta"></div><div class="ck"><i class="cx on"></i>Protect from accidental deletion</div></div>
        <div class="gr"><p><i class="rd"></i>Only audit silo policies</p><p><i class="rd on"></i>Enforce silo policies</p></div></div></div>
      <div class="sh"><h3>Permitted Accounts</h3><svg><use href="#q"/></svg><svg><use href="#x"/></svg><svg><use href="#c"/></svg></div>
      <div class="box perm"><div class="pl"><div class="ph"><span>Name<svg><use href="#srt"/></svg></span><span>Account Type</span><span>Assigned</span><span></span></div>
        <div class="pr sel"><span>AD-P1</span><span>Computer</span></div><div class="pr sel"><span>LEvans-DA</span><span>User</span></div><div class="pr sel"><span>NGreene-DA</span><span>User</span></div></div>
        <div class="pb"><b class="btn">Add...</b><b class="btn">Remove</b></div></div>
    </div>
    <div class="sb v7"><svg><use href="#cu"/></svg><i></i></div>
  </div>
</section>

<section class="win dlg d8">
  <div class="cap"><div class="wb"><svg><use href="#min"/></svg></div></div>
  <div class="dt"><h2>Create Authentication Policy Silo: AuthSilo</h2><span class="tk">TASKS<svg><use href="#dn"/></svg></span><span class="tk sc">SECTIONS</span></div>
  <div class="db">
    <ul class="dn-list"><li>General</li><li>Accounts</li><li>Policy</li></ul>
    <div class="ct">
      <div class="box prot"><div class="ck"><i class="cx on"></i>Protect from accidental deletion</div></div>
      <div class="sh"><h3>Permitted Accounts</h3></div>
      <div class="box perm"><div class="pl"><div class="ph"><span>Name<svg><use href="#srt"/></svg></span><span>Account Type</span><span>Assigned</span><span></span></div>
        <div class="pr sel"><span>AD-P1</span><span>Computer</span></div><div class="pr sel"><span>LEvans-DA</span><span>User</span></div><div class="pr sel"><span>NGreene-DA</span><span>User</span></div></div>
        <div class="pb"><b class="btn">Add...</b><b class="btn">Remove</b></div></div>
      <div class="sh"><h3>Authentication Policy</h3></div>
      <div class="box ap">
        <p class="r1"><i class="rd on"></i>Use a single policy for all principals that belong to this authentication policy silo.</p>
        <p class="r2"><svg class="ast"><use href="#ast"/></svg><span>The authentication policy that applies to all accounts in this silo:</span><b class="cmb act">AuthPolicy<svg><use href="#cdl"/></svg></b><b class="btn">Open</b></p>
        <p class="r3"><i class="rd"></i>Use a separate authentication policy for each type of principal.</p>
        <p class="r4"><span>User account policy:</span><b class="cmb"><svg><use href="#cdl"/></svg></b><b class="btn">Open</b></p>
        <p class="r4"><span>Managed Service Account policy:</span><b class="cmb"><svg><use href="#cdl"/></svg></b><b class="btn">Open</b></p>
        <p class="r4"><span>Computer account policy:</span><b class="cmb"><svg><use href="#cdl"/></svg></b><b class="btn">Open</b></p>
      </div>
    </div>
  </div>
  <div class="ft"><svg><use href="#c"/></svg>More Information<b class="btn ok">OK</b></div>
  <div class="task"></div>
</section>

<!-- Admins list -->
<section class="win adac a9">
  <header class="dark"></header>
  <div class="ad-body">
    <nav class="side">
      <div class="brand"><svg class="bk"><use href="#adbook"/></svg><span>Active Directory...</span><svg class="cl"><use href="#cl"/></svg></div>
      <div class="tabs"><i><svg><use href="#lst"/></svg></i><b><svg><use href="#tre"/></svg></b></div>
      <a><svg><use href="#ovw"/></svg>Overview</a>
      <a class="sel"><svg><use href="#srv"/></svg>dzab (local)<svg class="rt"><use href="#rt"/></svg></a>
      <a class="sub">People\Admins</a><a class="sub">People</a>
      <a><svg><use href="#dfo"/></svg>Dynamic Access Control<svg class="rt"><use href="#rt"/></svg></a>
      <a><svg><use href="#dfo"/></svg>Authentication<svg class="rt"><use href="#rt"/></svg></a>
      <a class="sub">Authentication Policy Silos</a><a class="sub">Authentication Policies</a>
      <a><svg><use href="#mag"/></svg>Global Search</a>
    </nav>
    <div class="list">
      <div class="lh"><b>Admins &nbsp;(5)</b></div>
      <div class="fbar"><div class="fi">Filter<svg><use href="#find"/></svg></div><svg class="cb"><use href="#cbl"/></svg><svg class="dn"><use href="#dn"/></svg></div>
      <div class="cols"><i></i><span class="srt">Name<svg><use href="#srt"/></svg></span><span>Type</span><span>Descri</span></div>
      <div class="lr"><i><svg><use href="#usr"/></svg></i><span>CBeaumont-ADM</span><span>User</span></div>
      <div class="lr"><i><svg><use href="#usr"/></svg></i><span>LEvans-ADM</span><span>User</span></div>
      <div class="lr sel"><i><svg><use href="#usr"/></svg></i><span>LEvans-DA</span><span>User</span></div>
      <div class="lr"><i><svg><use href="#usr"/></svg></i><span>NGreene-ADM</span><span>User</span></div>
      <div class="lr"><i><svg><use href="#usr"/></svg></i><span>NGreene-DA</span><span>User</span></div>
      <div class="det"><h5>LEvans-DA</h5><div class="dbox"><p><span class="w70">User logon:</span>LEvans-DA</p><p>E-mail:</p></div></div>
    </div>
  </div>
</section>
<section class="win dlg d9">
  <div class="dt"><h2>LEvans-DA</h2><span class="tk">TASKS<svg><use href="#dn"/></svg></span><span class="tk sc">SECTIONS<svg><use href="#dn"/></svg></span></div>
  <div class="db">
    <ul class="dn-list"><li>Account</li><li>Organization</li><li>Member Of</li><li>Password Settings</li><li>Profile</li><li>Policy</li><li>Silo</li><li>Extensions</li></ul>
    <div class="ct">
      <div class="sh"><h3>Authentication Policy Silo</h3><svg><use href="#q"/></svg><svg><use href="#x"/></svg><svg><use href="#c"/></svg></div>
      <div class="box asg"><p><i class="cx on"></i>Assign Authentication Policy Silo</p><p><svg class="ast"><use href="#ast"/></svg><span>Authentication Policy Silo:</span><b class="cmb">AuthSilo<svg><use href="#cdl"/></svg></b></p></div>
      <div class="sh"><h3>Extensions</h3><svg><use href="#x"/></svg><svg><use href="#c"/></svg></div>
      <div class="box ext"><div class="tabset">
        <div class="trow ta1"><span>Remote Desktop Services Profile</span><span>Security</span><span>Dial-in</span></div>
        <div class="trow ta2"><span>Published Certificates</span><span>Password Replication</span><span>Attribute Editor</span></div>
        <div class="trow ta3"><span class="cur">COM+</span><span>Environment</span><span>Sessions</span><span>Remote control</span></div>
        <div class="tpane"><p>This user is a member of the following COM+ partition set:</p><fieldset><legend>Partition <u>S</u>et</legend><div class="cmb">&lt;none&gt;<svg><use href="#cdl"/></svg></div></fieldset></div>
      </div></div>
    </div>
    <div class="sb v9"><svg><use href="#cu"/></svg><i></i><svg><use href="#cdl"/></svg></div>
  </div>
  <div class="ft"><svg><use href="#c"/></svg>More Information<b class="btn ok">OK</b><b class="btn">Cancel</b></div>
</section>
<div class="win edge9"></div>

<!-- AuthPolicy -->
<section class="win adac a10">
  <div class="grey"></div>
  <header class="dark"><svg class="nv"><use href="#navb"/></svg><svg class="dn"><use href="#dn"/></svg><h1>Act</h1></header>
  <div class="ad-body">
    <nav class="side">
      <div class="brand"><svg class="bk"><use href="#adbook"/></svg><span>Active Directory..</span></div>
      <div class="tabs"><i><svg><use href="#lst"/></svg></i><b><svg><use href="#tre"/></svg></b></div>
      <a><svg><use href="#ovw"/></svg>Overview</a>
      <a><svg><use href="#srv"/></svg>dzab (local)</a>
      <a class="sub">Domain Controllers</a><a class="sub">People\Admins</a><a class="sub">People</a>
      <a><svg><use href="#dfo"/></svg>Dynamic Access Control</a>
      <a class="sel"><svg><use href="#ofo"/></svg>Authentication</a>
      <a class="sub">Authentication Policies</a><a class="sub">Authentication Policy S</a>
      <a><svg><use href="#mag"/></svg>Global Search</a>
    </nav>
  </div>
</section>
<section class="win dlg d10">
  <div class="cap"></div>
  <div class="dt"><h2>AuthPolicy</h2><span class="tk">TASKS</span></div>
  <div class="db">
    <ul class="dn-list"><li>General</li><li>Accounts</li><li>Silos</li><li>User Sign On</li><li>Service Tickets for User Accounts</li><li>Service Sign On</li><li>Service Tickets for Service Accounts</li><li>Computer</li></ul>
    <div class="ct">
      <div class="box wht"><div></div></div>
      <div class="sh"><h3>User Sign On</h3></div>
      <div class="box uso">
        <p><i class="cx"></i>Require rolling NTLM secret for NTLM authentication</p>
        <p class="in1"><i class="cx dis"></i>Allow fallback to domain account password</p>
        <p class="tgt"><i class="cx on"></i>Specify a Ticket Granting Ticket lifetime for user accounts.</p>
        <p class="in1 ttl">Ticket-Granting-Ticket Lifetime (minutes):<svg class="ast"><use href="#ast"/></svg><b class="in">120</b></p>
        <p class="acc">Specify access control conditions that restrict devices that can request a Ticket Granting Ticket for the user accounts assigned to this policy.</p>
        <p class="in1 alw"><i class="cx"></i>Allow NTLM network authentication when user is restricted to selected devices</p>
        <p class="clk">Click Edit to define conditions</p>
        <div class="cond"><div class="cbx foc">(User.AuthenticationSilo Equals "AuthSilo")</div></div>
      </div>
      <div class="sh"><h3>Service Tickets for User Accounts</h3></div>
      <div class="box stu"><p>Services running as user accounts assigned to this policy will restrict connections to only users and devices that meet the conditions below.</p></div>
    </div>
  </div>
</section>

<!-- AuthSilo -->
<section class="win adac a11">
  <div class="grey"></div>
  <header class="dark"><svg class="nv"><use href="#navb"/></svg><svg class="dn"><use href="#dn"/></svg><h1>Act</h1></header>
  <div class="ad-body">
    <nav class="side">
      <div class="brand"><svg class="bk"><use href="#adbook"/></svg><span>Active Directory..</span></div>
      <div class="tabs"><i><svg><use href="#lst"/></svg></i><b><svg><use href="#tre"/></svg></b></div>
      <a><svg><use href="#ovw"/></svg>Overview</a>
      <a><svg><use href="#srv"/></svg>dzab (local)</a>
      <a class="sub">Domain Controllers</a><a class="sub">People\Admins</a><a class="sub">People</a>
      <a><svg><use href="#dfo"/></svg>Dynamic Access Control</a>
      <a class="sel"><svg><use href="#ofo"/></svg>Authentication</a>
      <a class="sub">Authentication Policies</a><a class="sub">Authentication Policy S</a>
      <a><svg><use href="#mag"/></svg>Global Search</a>
    </nav>
    <div class="list">
      <div class="lh"></div>
      <div class="fbar"><svg class="cb end"><use href="#v"/></svg></div>
      <div class="cols"></div><div class="lr sel"></div>
      <div class="det"><h5><svg class="vv"><use href="#cdl"/></svg></h5><div class="dbox"></div></div>
    </div>
  </div>
</section>
<section class="win dlg d11">
  <div class="cap"><div class="wb"><svg><use href="#min"/></svg><svg><use href="#max"/></svg><svg><use href="#cls"/></svg></div></div>
  <div class="dt"><h2>AuthSilo</h2><span class="tk">TASKS<svg><use href="#dn"/></svg></span><span class="tk sc">SECTIONS<svg><use href="#dn"/></svg></span></div>
  <div class="db">
    <ul class="dn-list"><li>General</li><li>Accounts</li><li>Policy</li></ul>
    <div class="ct">
      <div class="sh"><h3>General</h3><svg><use href="#q"/></svg><svg><use href="#x"/></svg><svg><use href="#c"/></svg></div>
      <div class="box gen"><p class="intro">An authentication policy silo controls which accounts are to be protected by the silo and defines the authentication policies to be applied to members of the silo.</p>
        <div class="g2"><div class="gl"><div class="gd"><span>Display name:</span><svg class="ast"><use href="#ast"/></svg><b class="in ro">AuthSilo</b></div><div class="gdl">Description:</div><div class="ta"></div><div class="ck"><i class="cx on"></i>Protect from accidental deletion</div></div>
        <div class="gr"><p><i class="rd on"></i>Only audit silo policies</p><p><i class="rd"></i>Enforce silo policies</p></div></div></div>
      <div class="sh"><h3>Permitted Accounts</h3><svg><use href="#q"/></svg><svg><use href="#x"/></svg><svg><use href="#c"/></svg></div>
      <div class="box perm"><div class="pl"><div class="ph"><span>Name<svg><use href="#srt"/></svg></span><span>Account Type</span><span>Assigned</span><span></span></div>
        <div class="pr sel"><span>AD-P1</span><span>Computer</span><svg><use href="#tick"/></svg></div><div class="pr"><span>LEvans-DA</span><span>User</span><svg><use href="#tick"/></svg></div><div class="pr"><span>NGreene-DA</span><span>User</span><svg><use href="#tick"/></svg></div></div>
        <div class="pb"><b class="btn">Add...</b><b class="btn">Remove</b></div></div>
      <div class="sh"><h3>Authentication Policy</h3><svg><use href="#q"/></svg><svg><use href="#x"/></svg><svg><use href="#c"/></svg></div>
      <div class="box rest"></div>
    </div>
    <div class="sb v11"><svg><use href="#cu"/></svg><i></i></div>
  </div>
</section>

<!-- Credential test -->
<section class="win adac a12">
  <div class="grey"></div>
  <header class="dark"><svg class="nv"><use href="#navb"/></svg><svg class="dn"><use href="#dn"/></svg><h1>Active Directory Administrative Center</h1><svg class="rt"><use href="#rt"/></svg><h1>Authentication</h1><svg class="rt"><use href="#rt"/></svg><h1>Authentication Policy Silos</h1></header>
  <div class="ad-body">
    <nav class="side">
      <div class="brand"><svg class="bk"><use href="#adbook"/></svg><span>Active Directory...</span><svg class="cl"><use href="#cl"/></svg></div>
      <div class="tabs"><i><svg><use href="#lst"/></svg></i><b><svg><use href="#tre"/></svg></b></div>
      <a><svg><use href="#ovw"/></svg>Overview</a>
      <a><svg><use href="#srv"/></svg>dzab (local)<svg class="rt"><use href="#rt"/></svg></a>
      <a class="sub">Domain Controllers</a><a class="sub">People\Admins</a><a class="sub">People</a>
      <a><svg><use href="#dfo"/></svg>Dynamic Access Control<svg class="rt"><use href="#rt"/></svg></a>
      <a class="sel"><svg><use href="#ofo"/></svg>Authentication<svg class="rt"><use href="#rt"/></svg></a>
      <a class="sub">Authentication Policy Silos</a><a class="sub">Authentication Policies</a>
      <a><svg><use href="#mag"/></svg>Global Search</a>
    </nav>
    <div class="list">
      <div class="lh"><b>Authentication Policy Silos &nbsp;(1)</b></div>
      <div class="fbar"><div class="fi">Filter<svg><use href="#find"/></svg></div><svg class="cb"><use href="#cbl"/></svg><svg class="dn"><use href="#dn"/></svg><svg class="cb end"><use href="#v"/></svg></div>
      <div class="cols"><i></i><span class="srt">Name<svg><use href="#srt"/></svg></span><span>Type</span><span>Des</span></div>
      <div class="lr sel"><i><svg viewBox="0 0 16 16"><path d="M.5.5h15v15h-15z" fill="#4c4c4c" stroke="#aaa"/><path d="M4 8h8" stroke="#ddd" stroke-width="2"/></svg></i><span>AuthSilo</span><span>Authenticat...</span></div>
      <div class="det"><h5>AuthSilo<svg class="vv"><use href="#cdl"/></svg></h5><div class="dbox"></div></div>
    </div>
  </div>
</section>
<section class="win cred">
  <div class="cr-cap">Windows Security<svg><use href="#cls"/></svg></div>
  <h2>Enter your credentials</h2>
  <p class="c1">These credentials will be used to connect to 10.0.1.5.</p>
  <p class="c2">(DA) Luke Evans</p>
  <div class="pw"><i></i>Password</div>
  <p class="c3">DZAB\levans-da</p>
  <p class="c4"><i></i>Remember me</p>
  <p class="c5">More choices</p>
  <div class="cbtn"><i></i><i></i></div>
</section>
<section class="win rdc">
  <p class="rt1">Remote Desktop Connection</p>
  <div class="rmsg"><svg viewBox="0 0 30 30"><circle cx="15" cy="15" r="15" fill="#e8391f"/><path d="M9 9l12 12M21 9l-12 12" stroke="#fff" stroke-width="2.500"/></svg><span>A user account restriction (for example, a time-of-day restriction) is preventing you from<br>logging on. For assistance, contact your system administrator or technical support.</span></div>
  <div class="rft"><svg viewBox="0 0 18 18"><circle cx="9" cy="9" r="8.300" fill="#fff" stroke="#888"/><path d="M5 7.500l4 4l4-4" fill="none" stroke="#777"/></svg>See details<b class="btn ok">OK</b></div>
</section>

<!-- Marker strokes, pen lines and pointers -->
<svg class="ink" viewBox="0 0 2781 4056" width="2781" height="4056">
  <g fill="none" stroke="#ffff00" stroke-opacity=".35" stroke-linecap="round" stroke-linejoin="round" stroke-width="16">
    <path d="M246 581l20-4l40 6h60l100 3h60l84-9"/>
    <path d="M984 656l60 6h130"/><path d="M225 887l40-7l30 5h38"/><path d="M143 1008h10"/>
    <path d="M1094 1708l30-2h64"/><path d="M1335 1828l30-3h22" stroke-width="18"/>
    <path d="M52 2358h40" stroke-width="15"/><path d="M429 2320l34-5"/><path d="M660 2316h50l56 4"/>
    <path d="M1142 2296l52-3M1418 2322l50 6l45-6" stroke-width="13"/><path d="M1745 2513l60-6" stroke-width="13"/>
    <path d="M963 2502l55-7l-8 11h45l50-13l74-14l29 98l-90 10l-48 9l-50-8h-40z" stroke-width="11"/>
    <path d="M1960 2560l90-3l88-6" stroke-width="14"/><path d="M2345 2587l14-8h56" stroke-width="13"/><path d="M2670 2764l40-4" stroke-width="13"/>
    <path d="M42 2926q30 22 78 6" stroke-width="17"/><path d="M243 3006l30-2l22-6" stroke-width="14"/><path d="M524 3028q16-2 26-12" stroke-width="15"/>
    <path d="M1374 3142l20-5h44"/><path d="M1762 3240l60 5h75l52-4" stroke-width="14"/>
    <path d="M58 3639l40 6l52 6"/><path d="M471 3717l18 6M467 3745h18M467 3777h14" stroke-width="14"/>
    <path d="M582 3683l30 6l16 43l-48 60l-32-4l-52-58l10-22l36-14z" stroke-width="13"/>
    <path d="M1818 3597l50-8h36" stroke-width="17"/>
  </g>
  <g fill="none" stroke="#ffff00">
    <path d="M106 167.500h133M966 227.500h56M1002 228.500h52M1054 229.500h104M1158 230.500h104M1262 231.500h52M1274 239.500h44"/>
    <path d="M1114 1385h58" stroke-width="2"/><path d="M701 1280l-66 57M1836 1451l-571 258"/>
    <ellipse cx="1874" cy="1420" rx="50" ry="87"/>
  </g>
  <g fill="none" stroke="#4f86ff" stroke-width="1.500"><path d="M2057 3638l72 38q34 20 40 60l10 40M2158 3771l34-4M2192 3767q12 12 15 45M2163 3777l15 15l30 22"/><path d="M2163 3775v5M2178 3790v5M2207 3792v5M2207 3808v7M2200 3807v5M2192 3765v5" stroke-width="4"/></g>
  <g stroke="#111"><path d="M2033 3745.500h456M2033 3774.500h327M2360.500 3762v16" stroke-width="1.200"/><path d="M2028.500 3740.500h7v9h-7z" fill="none"/><path d="M2099 3240.500h6M2099 3254.500h6M2102.500 3240v14M1919 3623.500h6M1919 3638.500h6M1922.500 3623v15"/></g>
  <use href="#ptr" x="1084" y="217" width="14" height="20"/><use href="#ptr" x="436" y="977" width="14" height="20"/><use href="#ptr" x="275" y="1508" width="14" height="20"/>
  <use href="#ptr" x="1879" y="1495" width="14" height="20"/><use href="#ptr" x="1389" y="1818" width="14" height="20"/><use href="#ptr" x="543" y="2312" width="14" height="20"/>
  <use href="#ptr" x="1256" y="2594" width="14" height="20"/><use href="#ptr" x="2403" y="2595" width="14" height="20"/><use href="#ptr" x="785" y="3131" width="14" height="20"/>
  <use href="#ptr" x="608" y="3772" width="14" height="20"/><use href="#ptr" x="2334" y="3897" width="14" height="20"/>
</svg>
<p class="red n1">audit : test<br>enforce : prod</p>
<p class="red n2">need to linked the authPolicySilo to our adObjects (eg : users, computers, etc)</p>
<p class="red n3">testing : target condition to all users</p>
<p class="red n4">a checkUp after done</p>
<p class="red n5">test after reboot DC - mstsc via my user</p>
<p class="red n6">but if i logon on the pc with hostname<br>with same user, it will work</p>
</main>
</body>
</html>
```
FILE: styles.css
```css
*{box-sizing:border-box;margin:0;padding:0}
body{background:#fff;font:12px/1 "Open Sans","Noto Sans",sans-serif;letter-spacing:-.4px;color:#111;white-space:nowrap}
ul{list-style:none}
svg{flex:none;display:block}
hr{border:0}
b{font-weight:400}
.defs{position:absolute}
.board{position:relative;width:2781px;height:4056px;overflow:hidden}
.win{position:absolute;overflow:hidden;display:flex;flex-direction:column}
.ink{position:absolute;left:0;top:0}
.i{width:16px;height:16px}

/* window buttons */
.wb{margin-left:auto;display:flex;gap:33.500px;color:#111}
.wb svg{width:12px;height:12px}
.wb .off{color:#999}

/* management console frames */
.cap2{display:flex;align-items:center;height:28px;gap:8px;padding-left:8px}
.cap2.dim{color:#888}.cap2.dim .wb{color:#888}
.menu{display:flex;align-items:center;gap:16.500px;height:24px;border-bottom:1px solid #aaa}
.tb{display:flex;align-items:center;height:23px;background:#fdfdfd;border-bottom:1px solid #ddd}
.tb .i{margin:0 3.200px;width:17px;height:17px}
.tb hr{width:1px;height:17px;background:#999;margin:0 5px}
.tb .on{background:#cce6fa;border:1px solid #99cdf2;height:21px;display:flex;align-items:center;margin-left:1px}
.gp-body{display:flex;flex:1;margin-top:6px;min-height:0}
.gpmc{left:0;top:0;width:440px;height:602px;border-left:4px solid #00a2ed;background:linear-gradient(#cfcfcf,#f0f0f0 45px)}
.gpmc .cap2{height:22px;padding:0 0 6px 8px;gap:5px}
.gpmc .menu{padding-left:3px}.gpmc .menu .i{margin-right:-9px}
.gpmc .tb{padding-left:2px}
.tree{background:#fff;border:1px solid #828790;padding-top:2px;overflow:hidden}
.tree li{display:flex;align-items:center;height:18px}
.tree .ch{width:12px;height:12px;margin-right:6px;flex:none}
.tree .i{margin-right:5px}
.picked{display:flex;align-items:center;height:18px;background:#d9d9d9;padding-right:4px;margin-left:-1px;padding-left:1px}
.picked.blue{background:#cce8ff}
.t1{width:352px;height:530px}
.t1 li{padding-left:5px}.t1 .root{padding-left:4px}.t1 .l1{padding-left:24px}.t1 .l2{padding-left:43px}.t1 .l3{padding-left:62px}.t1 .l4{padding-left:81px}
.scope{width:60px;margin-left:4px;border:1px solid #828790;border-width:1px 0 0 1px;overflow:hidden;background:#f0f0f0}
.scope h4{font-size:13px;padding:5px 0 0 2px;height:21px}
.scope-tab{margin-left:3px;background:#fff;padding-left:7px;height:440px}
.scope p{height:22px;line-height:22px}.scope .b{font-weight:700}.scope .far{height:34px;line-height:28px}
.gbox{border:1px solid #828790;height:130px;margin-left:1px;padding:8px 0 0 7px;width:200px}
.gbox .i{margin-top:6px}
.bar{height:6px;margin:5px -7px 3px;border-top:1px solid #ccc;border-bottom:1px solid #777;background:#eee}
.stub{height:20px;background:#ddd;border:1px solid #aaa;margin-top:6px;width:99px}
.gped{left:392px;top:2px;width:1091px;height:520px;border:1px solid #666;border-width:1.500px 0 0 1px;background:linear-gradient(#cdcdcd,#fcfcfc 48px,#f0f0f0 70px);box-shadow:0 -2px #c8c8c8}
.gped .cap2{height:29px;gap:6px}
.gped .cap2 .wb{margin-right:-7px}
.gped .menu{padding-left:10px}
.gped .tb{padding-left:2px}
.tree-wrap{display:flex;width:378px;border:1px solid #828790;background:#fff}
.tree-wrap .tree{border:0;flex:1;padding-top:1px}
.t2 li{padding-left:81px}.t2 .sys{padding-left:62px}
.sb{display:flex;flex-direction:column;align-items:center;background:#f0f0f0;color:#555;flex:none}
.sb svg{width:9px;height:9px}.sb i{background:#cdcdcd;width:100%}
.tsb{width:16px;padding-top:6px}.tsb i{margin-top:104px;flex:1}
.kpane{flex:1;display:flex;margin-left:4px;border:solid #6d7783;border-width:2px 0 0 2px;background:linear-gradient(#99b4d1 24px,#fff 24px)}
.kleft{width:203px}
.khead{height:24px;display:flex;align-items:center;gap:10px;padding-left:9px}
.kleft p{padding:8px 0 0 4px}
.ktab{flex:1;margin-top:15px;background:#fff;border-radius:8px 0 0 0;padding-top:9px}
.krow{display:flex;align-items:center;height:19.050px;padding-left:13px}
.krow svg{width:13px;height:15px;margin-right:4px}
.kn{width:355px;display:flex;align-items:center;flex:none}
.krow em{font-style:normal;border:1px solid #767676;background:#fff;color:#575757;padding:3px 6px 4px 5px;margin-left:-6px}
.khd{height:24px;align-items:stretch;line-height:24px}.khd .kn{width:345px}.khd .ks{border:1px solid #ddd;border-width:0 1px;width:100px;text-align:center;padding-left:0}

.kdc{left:25px;top:519px;width:1199px;height:552px;flex-direction:row;background:#fff}
.kdc-main{width:1193px;display:flex;flex-direction:column;background:linear-gradient(#c6c6c6,#fcfcfc 52px,#f0f0f0 70px)}
.kdc-main .cap2{margin-left:-6px;gap:6px;padding-left:0}
.kdc-main .cap2 .wb{margin-right:17px}
.kdc-main .menu{margin-left:-4px;padding-left:1px}
.kdc-main .tb{height:22px}.kdc-main .tb .i:first-child{margin-left:-9px}
.kdc-main .gp-body{margin-top:6.500px}
.kdc-edge{width:6px;background:linear-gradient(#d5d5d5 21px,#3d3d3d 21px,#3d3d3d 83px,#fff 83px)}
.t3{width:300px;border-width:1px 0 0;padding-top:1.500px}
.t3 li{padding-left:69px}.t3 .sys{padding-left:51px}
.kdc-list{flex:1;background:#fff;border-top:2px solid #6d7783;border-right:1px solid #777}
.kdc-list .hd{background:#99b4d1;height:15px}
.kr{display:grid;grid-template-columns:60px 100px 1fr;align-items:center;height:19px;padding-left:568px}
.kr span:nth-child(2){padding-left:9px}.kr span:nth-child(3){text-align:center;padding-left:36px}
.kh{height:24px;margin:10px 0 0}.kh span{height:24px;line-height:24px}.kh span:nth-child(2){border:1px solid #ddd;border-width:0 1px;text-align:center;padding:0}
.kr.sel{background:#efefef}
.btn{display:flex;align-items:center;justify-content:center;background:#dedede;border:1px solid #707070;height:20px;flex:none}
.btn.ok{border:1.500px solid #2a6fb0}
.pol{left:208px;top:566px;width:686px;height:505px;background:#f0f0f0;border:1px solid #555;border-bottom:0;border-top-width:1.500px}
.pol-cap{display:flex;align-items:center;height:30px;background:#fff;padding:0 17px 0 8px;gap:5px}
.pol-top{display:flex;height:56px;padding-left:6px}
.pol-top .i{margin:14px 8px 0 0}.pol-top span{width:412px;padding-top:14px}
.pol-top .btn{height:26px;width:101px;margin:14px 8px 0 0;border-color:#adadad;background:#e1e1e1}
.pol-top .off{background:#ccc;color:#aaa;text-shadow:1px 1px #f5f5f5;border-color:#bfbfbf}
.pol-mid{display:flex;height:138px}
.radios{width:131px;padding:0 0 0 9px}
.radios p{display:flex;align-items:center;gap:3px;height:27.500px}
.rd{width:13px;height:13px;border:1px solid #555;border-radius:50%;background:#fff;flex:none}
.rd.on{background:radial-gradient(circle,#222 3px,#fff 3.800px)}
.labels{width:86px}.labels p{height:78px;padding-top:3px}
.area{width:459px;height:73px;border:1px solid #7a7a7a;background:#fff;display:flex;justify-content:space-between}
.area.ro{height:47px;margin-top:5px;background:#f0f0f0;padding-left:5px}.area.ro span{padding-top:5px}
.asb{width:18px;background:#f0f0f0;display:flex;flex-direction:column;justify-content:space-between;align-items:center;padding:7px 0;color:#aaa}
.asb svg{width:9px;height:9px}
.pol-lbl{display:flex;height:36px;padding:2px 0 0 5px}.pol-lbl span{width:306px}
.pol-bot{display:flex;flex:1;padding:0 6px 0 3px}
.opts{width:299px;background:#fff;border:1px solid #828790;border-bottom:0;padding:7px 0 0 3px;line-height:16px;margin-right:8px}
.opts p{padding-left:2px}
.opts .combo{margin-top:6px;width:254px;height:24px;background:#e3e3e3;border:1px solid #999;display:flex;align-items:center;justify-content:space-between;padding:0 4px}
.opts .combo svg,.cmb svg{width:9px;height:9px;color:#555}
.helpt{width:353px;background:#fff;border:1px solid #828790;border-width:1px 1px 0;padding:2px 0 0 4px;line-height:15px}
.hsb{width:16px;padding-top:4px}.hsb i{margin-top:4px;height:80px}

/* administrative center */
.adac{border-left:1px solid #0078b0;background:#fff}
.a3{left:19px;top:1118px;width:1413px;height:612px;border-top:1.500px solid #104a7c}
.ad-cap{display:flex;align-items:center;height:30px;padding:0 5px 0 10px;gap:6px;background:linear-gradient(#b5b5b5,#e6e6e6)}
.ad-cap .bk{width:13px;height:15px}
.dark{height:62px;background:#3f3f3f;color:#f2f2f2;display:flex;align-items:center;flex:none}
.dark .nv{width:80px;height:40px;margin-left:10px}
.dark .dn{width:11px;height:8px;margin:-4px 0 0 -7px;color:#ddd}
.dark h1{font-weight:300;font-size:22.800px;letter-spacing:-.25px}
.dark .dn + h1{margin-left:36px;flex:none}
.dark .rt{width:5px;height:9px;margin:0 11px}
.dr{margin-left:auto;display:flex;align-items:center;font-size:12.500px;padding-right:25px}
.dr .dn.sm{width:8px;height:6px;margin:0 10px 0 0}.dr .rf{width:26px;height:27px}
.dr hr{width:1px;height:17px;background:#ccc;margin:0 8px 0 11px}.dr span+span{margin-left:24px}
.ad-body{display:flex;flex:1;min-height:0}
.side{width:200px;background:#f6f6f6;border-right:1px solid #ccc;flex:none;display:flex;flex-direction:column}
.brand{height:38px;background:#fcfcfc;display:flex;align-items:center;padding-left:8px;font-size:15.900px;letter-spacing:-.35px;flex:none;overflow:hidden}
.brand .bk{width:16px;height:21px;margin-right:14px}.brand span{flex:1}.brand .cl{width:7px;height:12px;margin-right:10px}
.tabs{height:26px;display:flex;margin-bottom:3px;flex:none}
.tabs i,.tabs b{display:flex;align-items:center;background:#fff}
.tabs i{width:29px;padding-left:9px;border-right:1px solid #999}.tabs b{flex:1;padding-left:6px;border-bottom:1px solid #888;background:#fcfcfc}
.tabs svg{width:12px;height:12px}.tabs b svg{width:15px}
.side a{display:flex;align-items:center;height:28px;padding-left:4px;flex:none;color:#333}
.side a svg{width:17px;height:17px;margin-right:4px}
.side a .rt{width:6px;height:11px;margin:0 10px 0 auto;color:#222}
.side .sub{height:24px;padding-left:35px;color:#2767b0}
.side .sel{background:#6b6b6b;color:#fff;height:24px;margin:2px 1px 2px 0}
.side .bl{background:#0071bc;width:175px;overflow:visible}
.side .bl .rt{margin-right:-14px}
.list{flex:1;display:flex;flex-direction:column;min-width:0}
.lh{height:31px;background:#fcfcfc;padding-left:9px;display:flex;align-items:center;color:#666;flex:none;font-size:13.100px}
.lh b{font-weight:700;letter-spacing:-.4px}
.lh .tasks{margin-left:auto;width:208px;border-left:1px solid #ccc;padding-left:9px;height:31px;line-height:34px}
.fbar{height:56px;background:#efefef;border-bottom:1px solid #c4c4c4;padding:0 0 5px 9px;display:flex;align-items:center;flex:none}
.fi{width:218px;height:23px;background:#fff;border:1px solid #bbb;display:flex;align-items:center;justify-content:space-between;padding:0 4px;font-style:italic;color:#555}
.fi svg{width:12px;height:14px}
.cb{width:20px;height:20px;margin-left:27px}.fbar .dn{width:10px;height:7px;margin-left:7px}
.cb + .dn + .cb{margin-left:23px}
.cb + .dn + .cb.end,.cb.end{margin:0 19px 0 auto}
.cols{height:32px;display:flex;color:#1f6fae;flex:none}
.cols i,.lr i{width:29px;flex:none}
.cols span{border-left:1px solid #ddd;height:22px;line-height:26px;padding-left:6px;width:160px;flex:none}
.cols .srt{display:flex}.cols .srt svg{width:8px;height:5px;margin:2px 0 0 40px}
.cols span:nth-child(3),.lr span:nth-child(3){width:80px}
.lr{display:flex;align-items:center;height:24px;flex:none;margin-bottom:1px}
.lr.sel{background:#0071bc;color:#fff}
.lr i{padding-left:7px}.lr svg{width:16px;height:16px}
.lr span{width:160px;padding-left:6px;flex:none}
.det{margin-top:auto;border-top:1px solid #c4c4c4;flex:none;background:#fcfcfc}
.det h5{font-weight:400;font-size:12px;height:26px;line-height:26px;padding-left:7px;border-bottom:1.500px solid #c4c4c4;display:flex;align-items:center}
.dbox{margin:3px 0 0 3px;border:1px solid #ccc;border-width:1px 0 0 1px;padding:4px 0 0 2px;height:48px}
.dbox p{height:21px;line-height:21px}.dbox p span{display:inline-block;width:78px}.dbox p .w75{width:75px}.dbox p .w70{width:70px}
.vv{width:11px;height:11px;margin:0 8px 0 auto}
.grey{height:8px;background:#dcdcdc;flex:none}
.a6{left:6px;top:2169px;width:1153px;height:336px}
.a6 .ad-body{margin-top:-22px}

/* dialogs */
.dlg{background:linear-gradient(#fff,#fafafa 60px,#fafafa 72%,#e2e2e2);border-right:1px solid #777}
.cap{height:41px;flex:none;display:flex;align-items:flex-start;padding:8px 18px 0 0}
.dt{height:41px;flex:none;display:flex;align-items:center;border-bottom:1.500px solid #c8c8c8;padding:2px 19px 0 12px}
.dt h2{font-weight:300;font-size:22.700px;letter-spacing:-.25px;color:#2f7487;flex:1}
.tk{width:82px;height:20px;border:1px solid #555;background:#fff;display:flex;align-items:center;justify-content:space-between;padding:0 8px;flex:none}
.tk svg{width:10px;height:8px}.tk.sc{width:97px;margin-left:13px}
.db{flex:1;display:flex;min-height:0}
.dn-list{width:239px;border-right:1px solid #ccc;padding:5px 0 0 19px;flex:none}
.dn-list li{height:28px;display:flex;align-items:center}
.ct{flex:1;padding-left:6px;display:flex;flex-direction:column;overflow:hidden;min-width:0}
.ct > *{flex:none}
.box{border:1.500px solid #ccc;padding-left:7px}
.sh{height:37px;display:flex;align-items:center;gap:2px;padding:8px 7px 0 1px}
.sh h3{font-weight:300;font-size:16.200px;letter-spacing:-.5px;color:#333;flex:1}
.sh svg{width:18px;height:18px}
.up11{margin-top:-11px}.up16{margin-top:-16px}
.gen{height:171px}
.intro{height:39px;line-height:38px}
.g2{display:flex}
.gl{width:460px}.gd{height:28px;display:flex;align-items:center}.gd span{flex:1}
.ast{width:15px;height:15px;color:#e2a0a4;margin-right:7px}
.in{width:288px;height:18px;border:1px solid #888;background:#fff;display:flex;align-items:center;padding-left:3px;flex:none}
.in.ro{background:#efefef;color:#777;border-color:#bbb}
.crt{width:1px;height:16px;background:#000}
.gdl{height:12px;line-height:8px}
.ta{height:58px;border:1px solid #c0c0c0;background:#fff}
.ck{height:33px;display:flex;align-items:center;gap:7px}
.cx{width:14px;height:14px;border:1px solid #555;background:#fff;flex:none;display:inline-flex;justify-content:center}
.cx.on::after{content:"";width:4px;height:8px;border:solid #111;border-width:0 1.800px 1.800px 0;transform:rotate(38deg)}
.cx.dis{background:#e3e3e3;border-color:#bbb}
.gr{padding-left:18px}.gr p{display:flex;align-items:center;gap:6px;height:21px}.gr p+p{height:24px}.gr .note{height:11px;padding-left:19px}
.rest{height:60px}
.ft{height:37px;flex:none;border-top:1.500px solid #c4c4c4;border-bottom:1.500px solid #777;display:flex;align-items:center;gap:2px;padding:0 5px 4px 0;background:linear-gradient(#ececec,#e2e2e2)}
.ft > svg{width:18px;height:18px}
.ft .btn{width:75px;margin:8px 0 0 9px}.ft .btn.ok{margin-left:auto}
.task{height:16px;background:linear-gradient(#ddd 5px,#ccc 5px,#ccc 6px,#ddd 6px);flex:none}
.task i{display:block;width:43px;height:16px;background:#00a2e4}
.strip{flex-direction:row;height:4px;background:#f2f2f2}
.strip i{width:44px;background:#00a2ed;margin-right:8px}.strip i+i{width:19px;background:#2488d0}
.s4s{left:683px;top:1243px;width:560px}.s5s{left:842px;top:1540px;width:400px}
.d4{left:683px;top:1247px;width:1201px;height:608px;border-top:1.500px solid #555}
.v4{width:17px;margin-left:7px;padding-top:4px}.v4 i{background:#555;height:128px;margin-top:17px}
.d5{left:842px;top:1543px;width:1201px;height:609px;border-top:1.500px solid #555}
.blk{left:2042px;top:2037px;width:3px;height:115px;background:#111}
.none{height:36px;display:flex;align-items:center;color:#666}
.uso{height:275px}
.uso p{display:flex;align-items:center;gap:6px;height:23px}
.uso p:first-child{margin-top:6px}.uso .in1{padding-left:14px}
.uso .tgt{margin-top:17px}.uso .ttl{height:30px;gap:0}.ttl .ast{margin:0 5px 0 9px}.ttl .in{width:180px}
.uso .acc{height:38px}.uso .alw{height:8px}.uso .clk{height:58px;padding-bottom:2px}
.cond{display:flex;gap:6px;margin-top:-14px}
.cbx{width:799px;height:54px;border:2px solid #a5a5a5;background:#fff;padding:4px 2px}
.cond .btn{width:111px}
.foc{border:2.500px solid #6697c4;flex:1}
.stu{height:68px;padding-top:4px}.stu p{height:31px;line-height:30px}
.cut{display:flex;gap:6px}.cut i{width:799px;height:2px;background:#888}.cut i+i{width:110px}
.v5{width:18px;margin-left:6px;padding-top:6px;color:#888}.v5 i{margin:115px 0 auto;height:127px}
.v5 svg:last-child{margin-bottom:4px}

.ctx{left:399px;top:2305px;width:214px;height:73px;background:#f1f1f1;border:1px solid #999;padding:2px 3px}
.ctx p{height:22px;display:flex;align-items:center;padding-left:35px}
.ctx .hot{border:1px solid #4a9fd0;height:23px;justify-content:space-between;padding-right:3px}
.ctx .hot svg{width:5px;height:9px}
.ctx2{left:608px;top:2305px;width:225px;height:28px;background:#f1f1f1;border:1px solid #999}
.ctx2 p{border-left:1px solid #999;margin:4px 0 0 31px;height:18px;line-height:19px;padding-left:5px}

.d7{left:861px;top:2193px;width:982px;height:435px;background:#fafafa;border-right:0;border-left:3px solid #1a1a1a}
.d7::before{content:"";height:5px;flex:none;margin-left:-3px;background:repeating-linear-gradient(90deg,#111 0 3px,#fff 3px 6px) 0 4px/100% 1.500px no-repeat,#1a1a1a}
.d7 .dt{height:61px;padding:22px 10px 0 15px}
.d7 .tk.sc{margin-left:14px}
.d7 .dn-list{width:90px;padding-left:21px}
.req{width:14px;height:14px;color:#c01020;margin-left:-18px;margin-right:4px}
.d7 .gl,.d11 .gl{width:426px}.d7 .in,.d11 .gl .in{width:254px}
.perm{height:170px;display:flex;padding-top:9.500px;gap:5px}
.pl{width:740px;height:150px;background:#fff;border-top:5px solid #efefef;flex:none}
.ph{display:flex;height:33px;border-top:1px solid #ccc;color:#1f6fae}
.ph span{height:19px;line-height:25px;padding-left:6px;border-right:1px solid #ddd;width:160px;display:flex}
.ph span:nth-child(2),.ph span:nth-child(3){width:100px}.ph span:nth-child(3){width:60px}.ph span:nth-child(4){border:0}
.ph svg{width:8px;height:5px;margin:2px 0 0 38px}
.pr{display:flex;align-items:center;height:24px;padding-left:5px}.pr span{width:160px}.pr svg{width:15px;height:16px;margin-left:-37px}
.pr.sel{background:#0071bc;color:#fff}
.pb{padding-top:31px}.pb .btn{width:101px;margin-bottom:10px}
.v7{width:9px;margin-left:6px}.v7 svg{margin-top:6px}.v7 i{margin-top:34px;flex:1}

.d8{left:1846px;top:2184px;width:877px;height:613px;border-right:0}
.d8 .cap{height:39px;padding:5px 10px 0 0}
.d8 .dt{padding:2px 0 0 2px;width:960px}
.d8 .dt h2{width:763px;flex:none}.d8 .dn-list{width:77px;padding-left:8px}
.d8 .ct > *{width:1000px}
.prot{height:33px;border-top:0;padding-left:9px}
.d8 .perm{padding-left:8px}
.ap{height:190px;padding-left:9px}.ap p{display:flex;align-items:center}
.ap .r1{height:34px;gap:6px}.ap .r2{height:24px}.ap .r2 .ast{margin:0 9px 0 16px}.ap .r2 span{width:353px}
.cmb{width:300px;height:23px;border:1px solid #bbb;background:#e6e6e6;display:flex;align-items:center;justify-content:space-between;padding:0 5px;flex:none}
.cmb svg{margin-left:auto}
.cmb.act{background:#e7f1fc;border-color:#7ea8d0}
.ap .btn{width:75px;height:23px;margin-left:8px}
.ap .r3{height:35px;padding-top:7px;gap:6px}
.ap .r4{height:31px;padding-left:40px}.ap .r4 span{width:191px}.ap .r4 .btn{background:#eee;color:#999;border-color:#aaa}.ap .r4 .cmb svg{color:#aaa}
.d8 .ft{margin-top:7px;padding-left:0;gap:8px}.d8 .ft > svg{margin-left:-15px}.d8 .ft .btn{margin-right:-14px}
.d8 .task{height:25px}

.a9{left:4px;top:2812px;width:489px;height:518px;border-left-color:#6cc}
.a9 .dark{height:17px}
.a9,.d9{font-size:11.600px}
.a9 .side{width:192px}.a9 .brand{height:37px;font-size:15.300px;padding-left:6px}.a9 .brand .bk{margin-right:13px}.a9 .brand .cl{margin-right:8px}
.a9 .tabs{height:24px}.a9 .tabs i{width:28px;padding-left:6px}
.a9 .side a{height:27px;padding-left:3px}.a9 .side a svg{margin-right:3px}.a9 .side .rt{margin:0 8px 0 auto}
.a9 .side .sub{height:23px;padding-left:33px}.a9 .side .sel{height:23px}
.a9 .lh{height:32px}.a9 .fbar{height:52px;padding-left:8px}.a9 .fi{width:210px;height:22px}.a9 .cb{margin-left:26px}
.a9 .cols{height:31px}.a9 .cols span,.a9 .lr span{width:153px}.a9 .cols span:nth-child(3),.a9 .lr span:nth-child(3){width:77px}
.a9 .lr{height:22.300px}.a9 .lr svg{height:17px}
.a9 .dbox p{height:20px}.a9 .det h5{font-size:11.600px}
.d9{left:493px;top:2812px;width:828px;height:518px;border-right:0;border-left:1px solid #bbb}
.d9 .dt{height:32px;padding:0 13px 6px 14px}.d9 .tk{width:79px;height:19px}.d9 .tk.sc{width:94px}
.d9 .dn-list{width:134px;padding-left:21px}.d9 .dn-list li{height:26.700px}
.d9 .ct{padding-left:5px}.d9 .sh{height:34px;padding-top:5px}.d9 .sh h3{font-size:15.700px}
.asg{height:65px;padding-left:8px}.asg p{display:flex;align-items:center;gap:6px;height:26px}.asg p:first-child{margin-top:6px}
.asg .ast{margin:0 3px 0 13px}.asg p span{width:132px}.asg .cmb{width:288px;height:21px;margin-left:0}
.ext{height:330px;display:flex;padding:11px 0 0 151px;margin-top:2px}
.tabset{width:368px}
.trow{display:grid;height:19px}.trow span{display:flex;align-items:center;justify-content:center;border:1px solid #bbb;border-width:1px 1px 0 1px;background:#f2f2f2;margin-left:-1px}
.ta1{grid-template-columns:206px 83px 77px}.ta2{grid-template-columns:133px 129px 104px}.ta3{grid-template-columns:72px 99px 80px 115px;height:20px}
.trow .cur{background:#fff}
.tpane{background:#f0f0f0;border:1px solid #ccc;height:270px;padding:15px 0 0 13px;width:366px}
.tpane p{letter-spacing:-.6px}
.tpane fieldset{width:335px;height:66px;border:1px solid #ddd;margin-top:16px;padding:11px 0 0 13px;letter-spacing:-.6px}
.tpane legend{padding:0 6px 0 4px;margin-left:-9px}
.tpane .cmb{width:307px;height:21px;background:#e3e3e3;border-color:#aaa}
.v9{width:12px;margin-left:6px;padding-top:4px}.v9 i{height:102px;margin:298px 0 auto}.v9 svg:last-child{margin-bottom:4px}
.d9 .ft{height:32px;padding:0 1px 4px 2px;border-bottom:0}.d9 .ft .btn{width:71px;height:19px;margin-left:11px;margin-top:7px}.d9 .ft .btn.ok{margin-left:auto}
.edge9{left:4px;top:2810px;width:1317px;height:520px;border:dashed #111;border-width:2px 0 1.500px}

.a10{left:1334px;top:2832px;width:160px;height:544px}
.a10 .brand span,.a11 .brand span{flex:none}
.d10{left:1493px;top:2837px;width:1050px;height:539px;border:solid #777;border-width:1.500px 0 0 1px;background:linear-gradient(#e2e2e2,#fafafa 50px)}
.d10 .dt{padding:2px 0 0 14px}.d10 .tk{margin-right:-25px}
.d10 .dn-list{width:240px;padding-left:21px}
.d10 .ct > *{width:1100px}
.wht{height:63px;border-top:0}.wht div{height:53px;background:#fff}
.a11{left:31px;top:3332px;width:1206px;height:544px}
.a11 .list{border-right:1px solid #ccc}
.a11 .fbar .cb.end{margin-right:11px}
.d11{left:189px;top:3337px;width:991px;height:539px;border:solid #777;border-width:1.500px 1.500px 0 1px;background:linear-gradient(#e2e2e2,#fafafa 50px)}
.a11 .dbox,.a12 .dbox{height:3px;padding:0;margin-bottom:0}
.d11 .dt{padding-left:15px}
.d11 .dn-list{width:92px;padding-left:22px}
.d11 .ct{padding-left:6px}.d11 .gr{padding-left:20px}
.v11{width:17px;margin-left:6px;padding-top:5px}.v11 i{height:319px;margin-top:5px}
.a12{left:1293px;top:3416px;width:1209px;height:540px;border-left:1px dashed #111;border-right:1.500px dashed #111;box-shadow:-9px 0 #1a1a1a}
.a12 .grey{height:6px}
.a12 .lr.sel{margin-right:3px}
.a12 .fbar .cb.end{margin-right:14px}
.cred{left:1788px;top:3471px;width:457px;height:369px;background:#e5e5e5;border:1px solid #2a7ab5;padding:0 23px}
.cr-cap{height:33px;display:flex;align-items:center;justify-content:space-between}.cr-cap svg{width:11px;height:11px;margin-right:-5px}
.cred h2{font-weight:400;font-size:17.800px;letter-spacing:-.5px;height:32px;line-height:30px}
.cred p{font-size:12.800px}
.c1{height:48px;line-height:48px}.c2{height:33px;line-height:28px}
.pw{width:297px;height:32px;background:#fff;border:1.500px solid #2a7ab5;display:flex;align-items:center;color:#999;font-size:12.800px;padding:2px 0 0 9px}
.pw i{width:1px;height:19px;background:#222}
.c3{height:48px;line-height:48px}.c4{height:22px;display:flex;align-items:center;gap:9px}.c4 i{width:20px;height:20px;border:2px solid #333}
.c5{color:#1c6fb5;height:62px;line-height:68px}
.cbtn{display:flex;gap:5px}.cbtn i{width:201px;height:26px;background:#bfbfbf;flex:none}
.rdc{left:1816px;top:3787px;width:559px;height:137px;background:#fff;border:1px dashed #111}
.rt1{border-top:1px solid #666;margin-top:1px;padding:11px 0 0 8px;height:40px}
.rmsg{display:flex;line-height:15px;gap:11px;padding:4px 0 0 11px;height:52px}.rmsg svg{width:30px;height:30px}.rmsg span{letter-spacing:-.48px}
.rft{flex:1;background:#f0f0f0;border-top:1px solid #ddd;display:flex;align-items:center;gap:8px;padding:0 12px 3px 10px}
.rft > svg{width:19px;height:19px}.rft .btn{margin-left:auto;width:67px;height:22px;background:#e5f1fb}

/* handwritten notes */
.red{position:absolute;color:#f00;font:23.900px/29px "DejaVu Sans",sans-serif;letter-spacing:0}
.n1{left:1440px;top:2339px}.n2{left:407px;top:3191px;font-size:23.150px}.n3{left:1950px;top:3252px}.n4{left:680px;top:3791px}.n5{left:1922px;top:3663px}.n6{left:2033px;top:3722px}
```
